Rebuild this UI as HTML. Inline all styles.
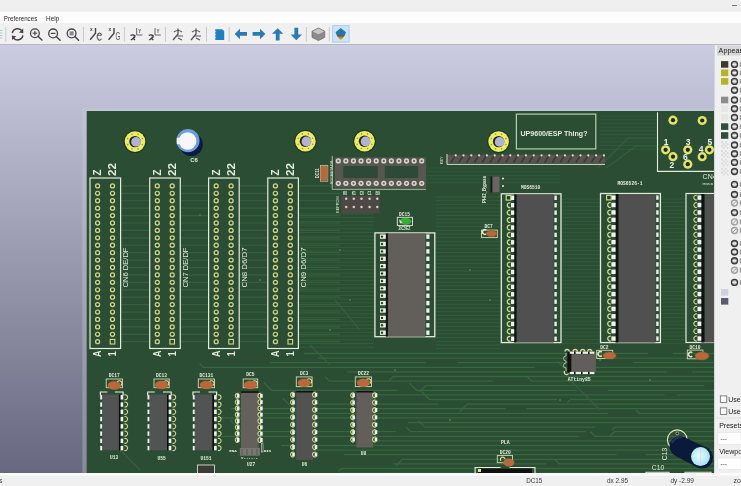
<!DOCTYPE html><html><head><meta charset="utf-8"><style>html,body{margin:0;padding:0;width:741px;height:486px;overflow:hidden;background:#f0f0f0}svg{display:block;will-change:transform}</style></head><body>
<svg width="741" height="486" viewBox="0 0 741 486">
<defs>
<linearGradient id="bg" x1="0" y1="45" x2="0" y2="473" gradientUnits="userSpaceOnUse">
<stop offset="0" stop-color="#cbcbe1"/><stop offset="1" stop-color="#67677f"/></linearGradient>
<clipPath id="cv"><rect x="0" y="45" width="714" height="428"/></clipPath>
<radialGradient id="c13" cx="0.45" cy="0.45" r="0.6"><stop offset="0" stop-color="#e8fbff"/><stop offset="1" stop-color="#9fe2f0"/></radialGradient>
<linearGradient id="hi" x1="0" y1="0" x2="0" y2="1"><stop offset="0" stop-color="#1d78bb"/><stop offset="0.55" stop-color="#1d78bb"/><stop offset="0.6" stop-color="#7a5a20"/><stop offset="1" stop-color="#e8c870"/></linearGradient>
</defs>
<rect x="0" y="0" width="741" height="12" fill="#efefef" />
<rect x="732" y="5" width="5" height="0.8" fill="#555" />
<rect x="0" y="11.8" width="741" height="11.4" fill="#fdfdfd" />
<text x="3.8" y="20.7" font-size="7" fill="#303030" text-anchor="start" font-weight="normal" font-family='"Liberation Sans", sans-serif' textLength="33.5" lengthAdjust="spacingAndGlyphs" >Preferences</text>
<text x="46.1" y="20.7" font-size="7" fill="#303030" text-anchor="start" font-weight="normal" font-family='"Liberation Sans", sans-serif' textLength="13.2" lengthAdjust="spacingAndGlyphs" >Help</text>
<rect x="0" y="23.2" width="741" height="20.8" fill="#f0f0f0" />
<rect x="0" y="44" width="741" height="1" fill="#b6b6c6" />
<rect x="0" y="30" width="2.5" height="1" fill="#9fd0d0" />
<rect x="0" y="32.5" width="2.5" height="1" fill="#9fd0d0" />
<rect x="0" y="35" width="2.5" height="1" fill="#9fd0d0" />
<rect x="0" y="37.5" width="2.5" height="1" fill="#9fd0d0" />
<rect x="5.3" y="27" width="1" height="14.5" fill="#c9c9c9" />
<rect x="83" y="27" width="1" height="14.5" fill="#c9c9c9" />
<rect x="123.9" y="27" width="1" height="14.5" fill="#c9c9c9" />
<rect x="165" y="27" width="1" height="14.5" fill="#c9c9c9" />
<rect x="206" y="27" width="1" height="14.5" fill="#c9c9c9" />
<rect x="228.7" y="27" width="1" height="14.5" fill="#c9c9c9" />
<rect x="305.9" y="27" width="1" height="14.5" fill="#c9c9c9" />
<rect x="328.8" y="27" width="1" height="14.5" fill="#c9c9c9" />
<path d="M12.3 33.2 A5.4 5.4 0 0 1 22.2 31.2" fill="none" stroke="#444" stroke-width="1.5"/>
<path d="M23.2 28.6 L23.3 33.2 L19.0 32.4 Z" fill="#444"/>
<path d="M22.9 35.4 A5.4 5.4 0 0 1 13.0 37.4" fill="none" stroke="#444" stroke-width="1.5"/>
<path d="M12.0 40.0 L11.9 35.4 L16.2 36.2 Z" fill="#444"/>
<circle cx="34.9" cy="33.2" r="4.4" fill="none" stroke="#444" stroke-width="1.3"/>
<path d="M38.0 36.300000000000004 L41.9 40.0" stroke="#444" stroke-width="1.5" stroke-linecap="round"/>
<rect x="32.6" y="32.65" width="4.6" height="1.1" fill="#444" />
<rect x="34.35" y="30.9" width="1.1" height="4.6" fill="#444" />
<circle cx="53.1" cy="33.4" r="4.4" fill="none" stroke="#444" stroke-width="1.3"/>
<path d="M56.2 36.5 L60.1 40.199999999999996" stroke="#444" stroke-width="1.5" stroke-linecap="round"/>
<rect x="50.8" y="32.8" width="4.6" height="1.2" fill="#444" />
<circle cx="71.6" cy="33.4" r="4.4" fill="none" stroke="#444" stroke-width="1.3"/>
<path d="M74.69999999999999 36.5 L78.6 40.199999999999996" stroke="#444" stroke-width="1.5" stroke-linecap="round"/>
<rect x="69.6" y="31.4" width="4" height="4" fill="#888" />
<text x="91.3" y="31.2" font-size="4.8" fill="#444" text-anchor="middle" font-weight="bold" font-family='"Liberation Sans", sans-serif' >x</text>
<path d="M95.5 28 L95.5 33.2 L90.1 39.8" fill="none" stroke="#444" stroke-width="1.4"/>
<path d="M101.6 35.2 H97.39999999999999 M101.6 35.2 A2.2 3.6 0 1 0 101.39999999999999 38.6" fill="none" stroke="#555" stroke-width="1.1"/>
<text x="109.8" y="31.2" font-size="4.8" fill="#444" text-anchor="middle" font-weight="bold" font-family='"Liberation Sans", sans-serif' >x</text>
<path d="M114.0 28 L114.0 33.2 L108.6 39.8" fill="none" stroke="#444" stroke-width="1.4"/>
<text x="115.5" y="39.5" font-size="10.5" fill="#555" text-anchor="start" font-weight="normal" font-family='"Liberation Sans", sans-serif' textLength="4.8" lengthAdjust="spacingAndGlyphs" >G</text>
<path d="M136.7 28 L136.7 35 L142.5 35" fill="none" stroke="#666" stroke-width="1"/>
<text x="138.2" y="32.5" font-size="4.5" fill="#555" text-anchor="start" font-weight="bold" font-family='"Liberation Sans", sans-serif' >Y</text>
<path d="M130.5 35.5 Q133 34 135 36 Q132 38 135 40 M131 40 L135 37" fill="none" stroke="#3a3a3a" stroke-width="1.4"/>
<path d="M155.0 28 L155.0 35 L160.8 35" fill="none" stroke="#666" stroke-width="1"/>
<text x="156.5" y="32.5" font-size="4.5" fill="#555" text-anchor="start" font-weight="bold" font-family='"Liberation Sans", sans-serif' >Y</text>
<path d="M148.8 35.5 Q151.3 34 153.3 36 Q150.3 38 153.3 40 M149.3 40 L153.3 37" fill="none" stroke="#3a3a3a" stroke-width="1.4"/>
<path d="M178 28.5 L178 34 L173 40" fill="none" stroke="#555" stroke-width="1.3"/>
<path d="M174 32 Q178 29 182 32 M176 36 L183 36 M178 38 L182 40" fill="none" stroke="#555" stroke-width="1.1"/>
<path d="M196 28.5 L196 34 L191 40" fill="none" stroke="#555" stroke-width="1.3"/>
<path d="M192 32 Q196 29 200 32 M194 36 L201 36 M196 38 L200 40" fill="none" stroke="#555" stroke-width="1.1"/>
<path d="M215.2 29.2 L222 29.2 L224.2 31 L224.2 40 L215.2 40 Z" fill="#1f7fc0"/>
<path d="M214.2 30 L215.6 31.5 L214.2 33" fill="none" stroke="#e8f2f8" stroke-width="0.8"/>
<path d="M214.2 33 L215.6 34.5 L214.2 36" fill="none" stroke="#e8f2f8" stroke-width="0.8"/>
<path d="M214.2 36 L215.6 37.5 L214.2 39" fill="none" stroke="#e8f2f8" stroke-width="0.8"/>
<path d="M214.2 39 L215.6 40.5 L214.2 42" fill="none" stroke="#e8f2f8" stroke-width="0.8"/>
<path d="M234.7 33.9 L240 28.7 L240 32 L247 32 L247 35.8 L240 35.8 L240 39.3 Z" fill="#2a7ab8"/>
<path d="M265.4 33.9 L260 28.7 L260 32 L252.6 32 L252.6 35.8 L260 35.8 L260 39.3 Z" fill="#2a7ab8"/>
<path d="M277.7 28.3 L283.3 33.8 L279.6 33.8 L279.6 40.5 L275.8 40.5 L275.8 33.8 L272 33.8 Z" fill="#2a7ab8"/>
<path d="M296.3 40.2 L302 34.6 L298.2 34.6 L298.2 27.8 L294.4 27.8 L294.4 34.6 L290.6 34.6 Z" fill="#2a7ab8"/>
<path d="M318.4 28 L324.8 31.2 L324.8 37.4 L318.4 40.6 L312 37.4 L312 31.2 Z" fill="#8c8c8c" stroke="#6a6a6a" stroke-width="0.7"/>
<path d="M318.4 28.6 L324.2 31.4 L318.4 34.2 L312.6 31.4 Z" fill="#c8c8c8"/>
<rect x="332.7" y="25.7" width="16.4" height="16.4" fill="#cce4f7" stroke="#99c8ee" stroke-width="0.8"/>
<path d="M340.8 28 L346 32.3 L344.5 36 L340.8 40.5 L337 36 L335.6 32.3 Z" fill="url(#hi)"/>
<rect x="0" y="45" width="714" height="428" fill="url(#bg)" />
<g clip-path="url(#cv)">
<rect x="82.3" y="107.8" width="640" height="400" fill="#ccd0d8" opacity="0.32"/>
<rect x="86.7" y="111" width="640" height="400" fill="#2a4d33" />
<path d="M121 185.9 H149 M180 185.9 H208 M239 185.9 H267 M299 185.9 H340 M121 193.32 H149 M180 193.32 H208 M239 193.32 H267 M299 193.32 H340 M121 200.74 H149 M180 200.74 H208 M239 200.74 H267 M299 200.74 H340 M121 208.16 H149 M180 208.16 H208 M239 208.16 H267 M299 208.16 H340 M121 215.58 H149 M180 215.58 H208 M239 215.58 H267 M299 215.58 H340 M121 223 H149 M180 223 H208 M239 223 H267 M299 223 H340 M121 230.42 H149 M180 230.42 H208 M239 230.42 H267 M299 230.42 H340 M121 237.84 H149 M180 237.84 H208 M239 237.84 H267 M299 237.84 H340 M121 245.26 H149 M180 245.26 H208 M239 245.26 H267 M299 245.26 H340 M121 252.68 H149 M180 252.68 H208 M239 252.68 H267 M299 252.68 H340 M121 260.1 H149 M180 260.1 H208 M239 260.1 H267 M299 260.1 H340 M121 267.52 H149 M180 267.52 H208 M239 267.52 H267 M299 267.52 H340 M121 274.94 H149 M180 274.94 H208 M239 274.94 H267 M299 274.94 H340 M121 282.36 H149 M180 282.36 H208 M239 282.36 H267 M299 282.36 H340 M121 289.78 H149 M180 289.78 H208 M239 289.78 H267 M299 289.78 H340 M121 297.2 H149 M180 297.2 H208 M239 297.2 H267 M299 297.2 H340 M121 304.62 H149 M180 304.62 H208 M239 304.62 H267 M299 304.62 H340 M121 312.04 H149 M180 312.04 H208 M239 312.04 H267 M299 312.04 H340 M121 319.46 H149 M180 319.46 H208 M239 319.46 H267 M299 319.46 H340 M121 326.88 H149 M180 326.88 H208 M239 326.88 H267 M299 326.88 H340 M121 334.3 H149 M180 334.3 H208 M239 334.3 H267 M299 334.3 H340 M121 341.72 H149 M180 341.72 H208 M239 341.72 H267 M299 341.72 H340" stroke="#34603c" stroke-width="1.2" fill="none"/>
<path d="M299 214 H374 M299 217.7 H374 M299 221.4 H374 M299 225.1 H374 M299 228.8 H374 M299 232.5 H374 M299 236.2 H374 M299 239.9 H374 M299 243.6 H374 M299 247.3 H374 M299 251 H374 M299 254.7 H374 M299 258.4 H374 M299 262.1 H374 M299 265.8 H374 M299 269.5 H374 M299 273.2 H374 M299 276.9 H374 M299 280.6 H374 M299 284.3 H374 M299 288 H374 M299 291.7 H374 M299 295.4 H374 M299 299.1 H374 M299 302.8 H374 M299 306.5 H374 M299 310.2 H374 M299 313.9 H374 M299 317.6 H374 M299 321.3 H374 M299 325 H374 M299 328.7 H374 M299 332.4 H374 M299 336.1 H374 M299 339.8 H374 M299 343.5 H374 M299 347.2 H374" stroke="#34603c" stroke-width="0.9" opacity="0.9" fill="none"/>
<path d="M436 197 H500 M436 200.7 H500 M436 204.4 H500 M436 208.1 H500 M436 211.8 H500 M436 215.5 H500 M436 219.2 H500 M436 222.9 H500 M436 226.6 H500 M436 230.3 H500 M436 234 H500 M436 237.7 H500 M436 241.4 H500 M436 245.1 H500 M436 248.8 H500 M436 252.5 H500 M436 256.2 H500 M436 259.9 H500 M436 263.6 H500 M436 267.3 H500 M436 271 H500 M436 274.7 H500 M436 278.4 H500 M436 282.1 H500 M436 285.8 H500 M436 289.5 H500 M436 293.2 H500 M436 296.9 H500 M436 300.6 H500 M436 304.3 H500 M436 308 H500 M436 311.7 H500 M436 315.4 H500 M436 319.1 H500 M436 322.8 H500 M436 326.5 H500 M436 330.2 H500 M436 333.9 H500 M436 337.6 H500 M436 341.3 H500 M436 345 H500 M436 348.7 H500" stroke="#34603c" stroke-width="0.9" opacity="0.9" fill="none"/>
<path d="M562 199 H600 M562 202.7 H600 M562 206.4 H600 M562 210.1 H600 M562 213.8 H600 M562 217.5 H600 M562 221.2 H600 M562 224.9 H600 M562 228.6 H600 M562 232.3 H600 M562 236 H600 M562 239.7 H600 M562 243.4 H600 M562 247.1 H600 M562 250.8 H600 M562 254.5 H600 M562 258.2 H600 M562 261.9 H600 M562 265.6 H600 M562 269.3 H600 M562 273 H600 M562 276.7 H600 M562 280.4 H600 M562 284.1 H600 M562 287.8 H600 M562 291.5 H600 M562 295.2 H600 M562 298.9 H600 M562 302.6 H600 M562 306.3 H600 M562 310 H600 M562 313.7 H600 M562 317.4 H600 M562 321.1 H600 M562 324.8 H600 M562 328.5 H600 M562 332.2 H600 M562 335.9 H600 M562 339.6 H600 M562 343.3 H600" stroke="#34603c" stroke-width="0.9" opacity="0.8" fill="none"/>
<path d="M661 199 H686 M661 202.7 H686 M661 206.4 H686 M661 210.1 H686 M661 213.8 H686 M661 217.5 H686 M661 221.2 H686 M661 224.9 H686 M661 228.6 H686 M661 232.3 H686 M661 236 H686 M661 239.7 H686 M661 243.4 H686 M661 247.1 H686 M661 250.8 H686 M661 254.5 H686 M661 258.2 H686 M661 261.9 H686 M661 265.6 H686 M661 269.3 H686 M661 273 H686 M661 276.7 H686 M661 280.4 H686 M661 284.1 H686 M661 287.8 H686 M661 291.5 H686 M661 295.2 H686 M661 298.9 H686 M661 302.6 H686 M661 306.3 H686 M661 310 H686 M661 313.7 H686 M661 317.4 H686 M661 321.1 H686 M661 324.8 H686 M661 328.5 H686 M661 332.2 H686 M661 335.9 H686 M661 339.6 H686 M661 343.3 H686" stroke="#34603c" stroke-width="0.9" opacity="0.8" fill="none"/>
<path d="M380 168 H560 M380 171.7 H560 M380 175.4 H560 M380 179.1 H560 M380 182.8 H560" stroke="#34603c" stroke-width="0.9" opacity="0.7" fill="none"/>
<path d="M600 116 H657 M600 119.7 H657 M600 123.4 H657 M600 127.1 H657 M600 130.8 H657 M600 134.5 H657 M600 138.2 H657 M600 141.9 H657 M600 145.6 H657 M600 149.3 H657" stroke="#34603c" stroke-width="0.9" opacity="0.7" fill="none"/>
<path d="M304.05 353.5 H647.96 M672.99 353.5 H714 M317.74 358.1 H689.69 M269.78 362.7 H426.05 M457.47 362.7 H594.22 M633.23 362.7 H714 M199.5 363.35 L203.45 367.3 H534.8 M557.64 361.35 L563.59 367.3 H714 M347.27 371.9 H667.18 M691.98 371.9 H714 M389.1 380.65 L393.25 376.5 H714 M325.07 376.65 L329.52 381.1 H492.69 M527.47 377.05 L531.52 381.1 H714 M419.34 391.85 L425.48 385.7 H704.45 M263.96 382.69 L271.58 390.3 H397.64 M409.55 383.31 L416.54 390.3 H576.96 M608.05 390.3 H714 M372.02 389.93 L376.99 394.9 H664.68 M676.7 394.9 H714 M421.54 391.52 L429.52 399.5 H557.37 M567.5 402.55 L570.55 399.5 H714 M282.64 397.92 L288.82 404.1 H438.53 M459.57 411.9 L467.37 404.1 H714 M231.22 408.7 H505.66 M526.36 408.7 H714 M236.45 413.3 H608.04 M635.88 409.91 L639.28 413.3 H714 M202.38 424.42 L208.9 417.9 H713.97 M408.11 422.5 H714 M418.48 420.83 L424.75 427.1 H595.31 M612.07 430.18 L615.16 427.1 H714 M251.63 426.04 L257.28 431.7 H395.92 M405.85 427.05 L410.51 431.7 H585.87 M609.6 436.49 L614.39 431.7 H714 M198.24 442.95 L204.89 436.3 H579.36 M590.35 431.46 L595.19 436.3 H714 M369.53 440.9 H714 M280.92 445.5 H674.98 M295.95 450.1 H714 M343.74 454.7 H616.67 M645.72 454.7 H714 M395.68 465.98 L402.35 459.3 H714 M392.83 463.9 H546.34 M555.02 459.75 L559.17 463.9 H714 M338.28 471.56 L341.34 468.5 H714 M340.7 473.1 H668.06 M685.45 477.31 L689.65 473.1 H714" stroke="#37663f" stroke-width="1.3" fill="none"/>
<path d="M598 168 L628 138 L657 138 M606 168 L636 146 L657 146 M335 300 L360 330 M120 450 L140 470 M230 420 L250 440 M310 345 L330 365 M570 380 L600 410" stroke="#34603c" stroke-width="1.2" fill="none"/>
<circle cx="200" cy="215" r="1" fill="#4c7a50" />
<circle cx="260" cy="280" r="1" fill="#4c7a50" />
<circle cx="340" cy="250" r="1" fill="#4c7a50" />
<circle cx="350" cy="300" r="1" fill="#4c7a50" />
<circle cx="330" cy="330" r="1" fill="#4c7a50" />
<circle cx="420" cy="260" r="1" fill="#4c7a50" />
<circle cx="470" cy="270" r="1" fill="#4c7a50" />
<circle cx="490" cy="300" r="1" fill="#4c7a50" />
<circle cx="600" cy="360" r="1" fill="#4c7a50" />
<circle cx="650" cy="380" r="1" fill="#4c7a50" />
<circle cx="560" cy="400" r="1" fill="#4c7a50" />
<circle cx="700" cy="300" r="1" fill="#4c7a50" />
<circle cx="395" cy="370" r="1" fill="#4c7a50" />
<circle cx="450" cy="420" r="1" fill="#4c7a50" />
<circle cx="150" cy="430" r="1" fill="#4c7a50" />
<circle cx="260" cy="420" r="1" fill="#4c7a50" />
<circle cx="135" cy="141.6" r="11.4" fill="#1b3322" opacity="0.8"/>
<circle cx="135" cy="141.6" r="10.3" fill="#ecec66" />
<circle cx="142.3" cy="144.62" r="0.8" fill="#9a9830" />
<circle cx="138.02" cy="148.9" r="0.8" fill="#9a9830" />
<circle cx="131.98" cy="148.9" r="0.8" fill="#9a9830" />
<circle cx="127.7" cy="144.62" r="0.8" fill="#9a9830" />
<circle cx="127.7" cy="138.58" r="0.8" fill="#9a9830" />
<circle cx="131.98" cy="134.3" r="0.8" fill="#9a9830" />
<circle cx="138.02" cy="134.3" r="0.8" fill="#9a9830" />
<circle cx="142.3" cy="138.58" r="0.8" fill="#9a9830" />
<circle cx="135" cy="141.6" r="5.7" fill="#1e2a20" />
<circle cx="136.1" cy="141.9" r="4.9" fill="#b4b2d2" />
<circle cx="305.4" cy="141.2" r="11.4" fill="#1b3322" opacity="0.8"/>
<circle cx="305.4" cy="141.2" r="10.3" fill="#ecec66" />
<circle cx="312.7" cy="144.22" r="0.8" fill="#9a9830" />
<circle cx="308.42" cy="148.5" r="0.8" fill="#9a9830" />
<circle cx="302.38" cy="148.5" r="0.8" fill="#9a9830" />
<circle cx="298.1" cy="144.22" r="0.8" fill="#9a9830" />
<circle cx="298.1" cy="138.18" r="0.8" fill="#9a9830" />
<circle cx="302.38" cy="133.9" r="0.8" fill="#9a9830" />
<circle cx="308.42" cy="133.9" r="0.8" fill="#9a9830" />
<circle cx="312.7" cy="138.18" r="0.8" fill="#9a9830" />
<circle cx="305.4" cy="141.2" r="5.7" fill="#1e2a20" />
<circle cx="306.5" cy="141.5" r="4.9" fill="#b4b2d2" />
<circle cx="364.5" cy="141.2" r="11.4" fill="#1b3322" opacity="0.8"/>
<circle cx="364.5" cy="141.2" r="10.3" fill="#ecec66" />
<circle cx="371.8" cy="144.22" r="0.8" fill="#9a9830" />
<circle cx="367.52" cy="148.5" r="0.8" fill="#9a9830" />
<circle cx="361.48" cy="148.5" r="0.8" fill="#9a9830" />
<circle cx="357.2" cy="144.22" r="0.8" fill="#9a9830" />
<circle cx="357.2" cy="138.18" r="0.8" fill="#9a9830" />
<circle cx="361.48" cy="133.9" r="0.8" fill="#9a9830" />
<circle cx="367.52" cy="133.9" r="0.8" fill="#9a9830" />
<circle cx="371.8" cy="138.18" r="0.8" fill="#9a9830" />
<circle cx="364.5" cy="141.2" r="5.7" fill="#1e2a20" />
<circle cx="365.6" cy="141.5" r="4.9" fill="#b4b2d2" />
<circle cx="498.6" cy="141.6" r="11.4" fill="#1b3322" opacity="0.8"/>
<circle cx="498.6" cy="141.6" r="10.3" fill="#ecec66" />
<circle cx="505.9" cy="144.62" r="0.8" fill="#9a9830" />
<circle cx="501.62" cy="148.9" r="0.8" fill="#9a9830" />
<circle cx="495.58" cy="148.9" r="0.8" fill="#9a9830" />
<circle cx="491.3" cy="144.62" r="0.8" fill="#9a9830" />
<circle cx="491.3" cy="138.58" r="0.8" fill="#9a9830" />
<circle cx="495.58" cy="134.3" r="0.8" fill="#9a9830" />
<circle cx="501.62" cy="134.3" r="0.8" fill="#9a9830" />
<circle cx="505.9" cy="138.58" r="0.8" fill="#9a9830" />
<circle cx="498.6" cy="141.6" r="5.7" fill="#1e2a20" />
<circle cx="499.7" cy="141.9" r="4.9" fill="#b4b2d2" />
<circle cx="191.2" cy="144.5" r="11.6" fill="#0a1a40" />
<circle cx="188" cy="140.6" r="11.6" fill="#6a9ee0" />
<circle cx="187.6" cy="141" r="8.8" fill="#f8f6fc" />
<rect x="176.8" y="137.8" width="4" height="6.4" fill="#f0f2f4" />
<text x="194" y="162" font-size="6" fill="#e4ecdc" text-anchor="middle" font-weight="bold" font-family='"Liberation Sans", sans-serif' >C6</text>
<rect x="90" y="178" width="30.6" height="170.5" fill="none" stroke="#e4ecdc" stroke-width="1.2" />
<circle cx="97.6" cy="185.9" r="2.65" fill="#d0d688"/>
<circle cx="97.6" cy="185.9" r="1.45" fill="#56643c"/>
<circle cx="97.6" cy="185.9" r="0.75" fill="#141c10"/>
<circle cx="112.5" cy="185.9" r="2.65" fill="#d0d688"/>
<circle cx="112.5" cy="185.9" r="1.45" fill="#56643c"/>
<circle cx="112.5" cy="185.9" r="0.75" fill="#141c10"/>
<circle cx="97.6" cy="193.32" r="2.65" fill="#d0d688"/>
<circle cx="97.6" cy="193.32" r="1.45" fill="#56643c"/>
<circle cx="97.6" cy="193.32" r="0.75" fill="#141c10"/>
<circle cx="112.5" cy="193.32" r="2.65" fill="#d0d688"/>
<circle cx="112.5" cy="193.32" r="1.45" fill="#56643c"/>
<circle cx="112.5" cy="193.32" r="0.75" fill="#141c10"/>
<circle cx="97.6" cy="200.74" r="2.65" fill="#d0d688"/>
<circle cx="97.6" cy="200.74" r="1.45" fill="#56643c"/>
<circle cx="97.6" cy="200.74" r="0.75" fill="#141c10"/>
<circle cx="112.5" cy="200.74" r="2.65" fill="#d0d688"/>
<circle cx="112.5" cy="200.74" r="1.45" fill="#56643c"/>
<circle cx="112.5" cy="200.74" r="0.75" fill="#141c10"/>
<circle cx="97.6" cy="208.16" r="2.65" fill="#d0d688"/>
<circle cx="97.6" cy="208.16" r="1.45" fill="#56643c"/>
<circle cx="97.6" cy="208.16" r="0.75" fill="#141c10"/>
<circle cx="112.5" cy="208.16" r="2.65" fill="#d0d688"/>
<circle cx="112.5" cy="208.16" r="1.45" fill="#56643c"/>
<circle cx="112.5" cy="208.16" r="0.75" fill="#141c10"/>
<circle cx="97.6" cy="215.58" r="2.65" fill="#d0d688"/>
<circle cx="97.6" cy="215.58" r="1.45" fill="#56643c"/>
<circle cx="97.6" cy="215.58" r="0.75" fill="#141c10"/>
<circle cx="112.5" cy="215.58" r="2.65" fill="#d0d688"/>
<circle cx="112.5" cy="215.58" r="1.45" fill="#56643c"/>
<circle cx="112.5" cy="215.58" r="0.75" fill="#141c10"/>
<circle cx="97.6" cy="223" r="2.65" fill="#d0d688"/>
<circle cx="97.6" cy="223" r="1.45" fill="#56643c"/>
<circle cx="97.6" cy="223" r="0.75" fill="#141c10"/>
<circle cx="112.5" cy="223" r="2.65" fill="#d0d688"/>
<circle cx="112.5" cy="223" r="1.45" fill="#56643c"/>
<circle cx="112.5" cy="223" r="0.75" fill="#141c10"/>
<circle cx="97.6" cy="230.42" r="2.65" fill="#d0d688"/>
<circle cx="97.6" cy="230.42" r="1.45" fill="#56643c"/>
<circle cx="97.6" cy="230.42" r="0.75" fill="#141c10"/>
<circle cx="112.5" cy="230.42" r="2.65" fill="#d0d688"/>
<circle cx="112.5" cy="230.42" r="1.45" fill="#56643c"/>
<circle cx="112.5" cy="230.42" r="0.75" fill="#141c10"/>
<circle cx="97.6" cy="237.84" r="2.65" fill="#d0d688"/>
<circle cx="97.6" cy="237.84" r="1.45" fill="#56643c"/>
<circle cx="97.6" cy="237.84" r="0.75" fill="#141c10"/>
<circle cx="112.5" cy="237.84" r="2.65" fill="#d0d688"/>
<circle cx="112.5" cy="237.84" r="1.45" fill="#56643c"/>
<circle cx="112.5" cy="237.84" r="0.75" fill="#141c10"/>
<circle cx="97.6" cy="245.26" r="2.65" fill="#d0d688"/>
<circle cx="97.6" cy="245.26" r="1.45" fill="#56643c"/>
<circle cx="97.6" cy="245.26" r="0.75" fill="#141c10"/>
<circle cx="112.5" cy="245.26" r="2.65" fill="#d0d688"/>
<circle cx="112.5" cy="245.26" r="1.45" fill="#56643c"/>
<circle cx="112.5" cy="245.26" r="0.75" fill="#141c10"/>
<circle cx="97.6" cy="252.68" r="2.65" fill="#d0d688"/>
<circle cx="97.6" cy="252.68" r="1.45" fill="#56643c"/>
<circle cx="97.6" cy="252.68" r="0.75" fill="#141c10"/>
<circle cx="112.5" cy="252.68" r="2.65" fill="#d0d688"/>
<circle cx="112.5" cy="252.68" r="1.45" fill="#56643c"/>
<circle cx="112.5" cy="252.68" r="0.75" fill="#141c10"/>
<circle cx="97.6" cy="260.1" r="2.65" fill="#d0d688"/>
<circle cx="97.6" cy="260.1" r="1.45" fill="#56643c"/>
<circle cx="97.6" cy="260.1" r="0.75" fill="#141c10"/>
<circle cx="112.5" cy="260.1" r="2.65" fill="#d0d688"/>
<circle cx="112.5" cy="260.1" r="1.45" fill="#56643c"/>
<circle cx="112.5" cy="260.1" r="0.75" fill="#141c10"/>
<circle cx="97.6" cy="267.52" r="2.65" fill="#d0d688"/>
<circle cx="97.6" cy="267.52" r="1.45" fill="#56643c"/>
<circle cx="97.6" cy="267.52" r="0.75" fill="#141c10"/>
<circle cx="112.5" cy="267.52" r="2.65" fill="#d0d688"/>
<circle cx="112.5" cy="267.52" r="1.45" fill="#56643c"/>
<circle cx="112.5" cy="267.52" r="0.75" fill="#141c10"/>
<circle cx="97.6" cy="274.94" r="2.65" fill="#d0d688"/>
<circle cx="97.6" cy="274.94" r="1.45" fill="#56643c"/>
<circle cx="97.6" cy="274.94" r="0.75" fill="#141c10"/>
<circle cx="112.5" cy="274.94" r="2.65" fill="#d0d688"/>
<circle cx="112.5" cy="274.94" r="1.45" fill="#56643c"/>
<circle cx="112.5" cy="274.94" r="0.75" fill="#141c10"/>
<circle cx="97.6" cy="282.36" r="2.65" fill="#d0d688"/>
<circle cx="97.6" cy="282.36" r="1.45" fill="#56643c"/>
<circle cx="97.6" cy="282.36" r="0.75" fill="#141c10"/>
<circle cx="112.5" cy="282.36" r="2.65" fill="#d0d688"/>
<circle cx="112.5" cy="282.36" r="1.45" fill="#56643c"/>
<circle cx="112.5" cy="282.36" r="0.75" fill="#141c10"/>
<circle cx="97.6" cy="289.78" r="2.65" fill="#d0d688"/>
<circle cx="97.6" cy="289.78" r="1.45" fill="#56643c"/>
<circle cx="97.6" cy="289.78" r="0.75" fill="#141c10"/>
<circle cx="112.5" cy="289.78" r="2.65" fill="#d0d688"/>
<circle cx="112.5" cy="289.78" r="1.45" fill="#56643c"/>
<circle cx="112.5" cy="289.78" r="0.75" fill="#141c10"/>
<circle cx="97.6" cy="297.2" r="2.65" fill="#d0d688"/>
<circle cx="97.6" cy="297.2" r="1.45" fill="#56643c"/>
<circle cx="97.6" cy="297.2" r="0.75" fill="#141c10"/>
<circle cx="112.5" cy="297.2" r="2.65" fill="#d0d688"/>
<circle cx="112.5" cy="297.2" r="1.45" fill="#56643c"/>
<circle cx="112.5" cy="297.2" r="0.75" fill="#141c10"/>
<circle cx="97.6" cy="304.62" r="2.65" fill="#d0d688"/>
<circle cx="97.6" cy="304.62" r="1.45" fill="#56643c"/>
<circle cx="97.6" cy="304.62" r="0.75" fill="#141c10"/>
<circle cx="112.5" cy="304.62" r="2.65" fill="#d0d688"/>
<circle cx="112.5" cy="304.62" r="1.45" fill="#56643c"/>
<circle cx="112.5" cy="304.62" r="0.75" fill="#141c10"/>
<circle cx="97.6" cy="312.04" r="2.65" fill="#d0d688"/>
<circle cx="97.6" cy="312.04" r="1.45" fill="#56643c"/>
<circle cx="97.6" cy="312.04" r="0.75" fill="#141c10"/>
<circle cx="112.5" cy="312.04" r="2.65" fill="#d0d688"/>
<circle cx="112.5" cy="312.04" r="1.45" fill="#56643c"/>
<circle cx="112.5" cy="312.04" r="0.75" fill="#141c10"/>
<circle cx="97.6" cy="319.46" r="2.65" fill="#d0d688"/>
<circle cx="97.6" cy="319.46" r="1.45" fill="#56643c"/>
<circle cx="97.6" cy="319.46" r="0.75" fill="#141c10"/>
<circle cx="112.5" cy="319.46" r="2.65" fill="#d0d688"/>
<circle cx="112.5" cy="319.46" r="1.45" fill="#56643c"/>
<circle cx="112.5" cy="319.46" r="0.75" fill="#141c10"/>
<circle cx="97.6" cy="326.88" r="2.65" fill="#d0d688"/>
<circle cx="97.6" cy="326.88" r="1.45" fill="#56643c"/>
<circle cx="97.6" cy="326.88" r="0.75" fill="#141c10"/>
<circle cx="112.5" cy="326.88" r="2.65" fill="#d0d688"/>
<circle cx="112.5" cy="326.88" r="1.45" fill="#56643c"/>
<circle cx="112.5" cy="326.88" r="0.75" fill="#141c10"/>
<circle cx="97.6" cy="334.3" r="2.65" fill="#d0d688"/>
<circle cx="97.6" cy="334.3" r="1.45" fill="#56643c"/>
<circle cx="97.6" cy="334.3" r="0.75" fill="#141c10"/>
<circle cx="112.5" cy="334.3" r="2.65" fill="#d0d688"/>
<circle cx="112.5" cy="334.3" r="1.45" fill="#56643c"/>
<circle cx="112.5" cy="334.3" r="0.75" fill="#141c10"/>
<circle cx="97.6" cy="341.72" r="2.65" fill="#d0d688"/>
<circle cx="97.6" cy="341.72" r="1.45" fill="#56643c"/>
<circle cx="97.6" cy="341.72" r="0.75" fill="#141c10"/>
<rect x="110.2" y="339.42" width="4.6" height="4.6" fill="#2c4a2c" stroke="#d4d68a" stroke-width="1.1"/>
<text x="101.15" y="172.5" font-size="10" fill="#e4ecdc" text-anchor="middle" font-weight="bold" font-family='"Liberation Sans", sans-serif' textLength="6" lengthAdjust="spacingAndGlyphs" transform="rotate(-90 101.15 172.5)" >Z</text>
<text x="116.2" y="169.5" font-size="10" fill="#e4ecdc" text-anchor="middle" font-weight="bold" font-family='"Liberation Sans", sans-serif' textLength="12.9" lengthAdjust="spacingAndGlyphs" transform="rotate(-90 116.2 169.5)" >22</text>
<text x="101.15" y="353.7" font-size="10" fill="#e4ecdc" text-anchor="middle" font-weight="bold" font-family='"Liberation Sans", sans-serif' textLength="6.5" lengthAdjust="spacingAndGlyphs" transform="rotate(-90 101.15 353.7)" >A</text>
<text x="116.05" y="353.7" font-size="10" fill="#e4ecdc" text-anchor="middle" font-weight="bold" font-family='"Liberation Sans", sans-serif' textLength="5" lengthAdjust="spacingAndGlyphs" transform="rotate(-90 116.05 353.7)" >1</text>
<text x="127.9" y="267.5" font-size="7.4" fill="#e4ecdc" text-anchor="middle" font-weight="normal" font-family='"Liberation Sans", sans-serif' textLength="40" lengthAdjust="spacingAndGlyphs" transform="rotate(-90 127.9 267.5)" >CN6 DE/DF</text>
<rect x="149.7" y="178" width="30.6" height="170.5" fill="none" stroke="#e4ecdc" stroke-width="1.2" />
<circle cx="157.3" cy="185.9" r="2.65" fill="#d0d688"/>
<circle cx="157.3" cy="185.9" r="1.45" fill="#56643c"/>
<circle cx="157.3" cy="185.9" r="0.75" fill="#141c10"/>
<circle cx="172.2" cy="185.9" r="2.65" fill="#d0d688"/>
<circle cx="172.2" cy="185.9" r="1.45" fill="#56643c"/>
<circle cx="172.2" cy="185.9" r="0.75" fill="#141c10"/>
<circle cx="157.3" cy="193.32" r="2.65" fill="#d0d688"/>
<circle cx="157.3" cy="193.32" r="1.45" fill="#56643c"/>
<circle cx="157.3" cy="193.32" r="0.75" fill="#141c10"/>
<circle cx="172.2" cy="193.32" r="2.65" fill="#d0d688"/>
<circle cx="172.2" cy="193.32" r="1.45" fill="#56643c"/>
<circle cx="172.2" cy="193.32" r="0.75" fill="#141c10"/>
<circle cx="157.3" cy="200.74" r="2.65" fill="#d0d688"/>
<circle cx="157.3" cy="200.74" r="1.45" fill="#56643c"/>
<circle cx="157.3" cy="200.74" r="0.75" fill="#141c10"/>
<circle cx="172.2" cy="200.74" r="2.65" fill="#d0d688"/>
<circle cx="172.2" cy="200.74" r="1.45" fill="#56643c"/>
<circle cx="172.2" cy="200.74" r="0.75" fill="#141c10"/>
<circle cx="157.3" cy="208.16" r="2.65" fill="#d0d688"/>
<circle cx="157.3" cy="208.16" r="1.45" fill="#56643c"/>
<circle cx="157.3" cy="208.16" r="0.75" fill="#141c10"/>
<circle cx="172.2" cy="208.16" r="2.65" fill="#d0d688"/>
<circle cx="172.2" cy="208.16" r="1.45" fill="#56643c"/>
<circle cx="172.2" cy="208.16" r="0.75" fill="#141c10"/>
<circle cx="157.3" cy="215.58" r="2.65" fill="#d0d688"/>
<circle cx="157.3" cy="215.58" r="1.45" fill="#56643c"/>
<circle cx="157.3" cy="215.58" r="0.75" fill="#141c10"/>
<circle cx="172.2" cy="215.58" r="2.65" fill="#d0d688"/>
<circle cx="172.2" cy="215.58" r="1.45" fill="#56643c"/>
<circle cx="172.2" cy="215.58" r="0.75" fill="#141c10"/>
<circle cx="157.3" cy="223" r="2.65" fill="#d0d688"/>
<circle cx="157.3" cy="223" r="1.45" fill="#56643c"/>
<circle cx="157.3" cy="223" r="0.75" fill="#141c10"/>
<circle cx="172.2" cy="223" r="2.65" fill="#d0d688"/>
<circle cx="172.2" cy="223" r="1.45" fill="#56643c"/>
<circle cx="172.2" cy="223" r="0.75" fill="#141c10"/>
<circle cx="157.3" cy="230.42" r="2.65" fill="#d0d688"/>
<circle cx="157.3" cy="230.42" r="1.45" fill="#56643c"/>
<circle cx="157.3" cy="230.42" r="0.75" fill="#141c10"/>
<circle cx="172.2" cy="230.42" r="2.65" fill="#d0d688"/>
<circle cx="172.2" cy="230.42" r="1.45" fill="#56643c"/>
<circle cx="172.2" cy="230.42" r="0.75" fill="#141c10"/>
<circle cx="157.3" cy="237.84" r="2.65" fill="#d0d688"/>
<circle cx="157.3" cy="237.84" r="1.45" fill="#56643c"/>
<circle cx="157.3" cy="237.84" r="0.75" fill="#141c10"/>
<circle cx="172.2" cy="237.84" r="2.65" fill="#d0d688"/>
<circle cx="172.2" cy="237.84" r="1.45" fill="#56643c"/>
<circle cx="172.2" cy="237.84" r="0.75" fill="#141c10"/>
<circle cx="157.3" cy="245.26" r="2.65" fill="#d0d688"/>
<circle cx="157.3" cy="245.26" r="1.45" fill="#56643c"/>
<circle cx="157.3" cy="245.26" r="0.75" fill="#141c10"/>
<circle cx="172.2" cy="245.26" r="2.65" fill="#d0d688"/>
<circle cx="172.2" cy="245.26" r="1.45" fill="#56643c"/>
<circle cx="172.2" cy="245.26" r="0.75" fill="#141c10"/>
<circle cx="157.3" cy="252.68" r="2.65" fill="#d0d688"/>
<circle cx="157.3" cy="252.68" r="1.45" fill="#56643c"/>
<circle cx="157.3" cy="252.68" r="0.75" fill="#141c10"/>
<circle cx="172.2" cy="252.68" r="2.65" fill="#d0d688"/>
<circle cx="172.2" cy="252.68" r="1.45" fill="#56643c"/>
<circle cx="172.2" cy="252.68" r="0.75" fill="#141c10"/>
<circle cx="157.3" cy="260.1" r="2.65" fill="#d0d688"/>
<circle cx="157.3" cy="260.1" r="1.45" fill="#56643c"/>
<circle cx="157.3" cy="260.1" r="0.75" fill="#141c10"/>
<circle cx="172.2" cy="260.1" r="2.65" fill="#d0d688"/>
<circle cx="172.2" cy="260.1" r="1.45" fill="#56643c"/>
<circle cx="172.2" cy="260.1" r="0.75" fill="#141c10"/>
<circle cx="157.3" cy="267.52" r="2.65" fill="#d0d688"/>
<circle cx="157.3" cy="267.52" r="1.45" fill="#56643c"/>
<circle cx="157.3" cy="267.52" r="0.75" fill="#141c10"/>
<circle cx="172.2" cy="267.52" r="2.65" fill="#d0d688"/>
<circle cx="172.2" cy="267.52" r="1.45" fill="#56643c"/>
<circle cx="172.2" cy="267.52" r="0.75" fill="#141c10"/>
<circle cx="157.3" cy="274.94" r="2.65" fill="#d0d688"/>
<circle cx="157.3" cy="274.94" r="1.45" fill="#56643c"/>
<circle cx="157.3" cy="274.94" r="0.75" fill="#141c10"/>
<circle cx="172.2" cy="274.94" r="2.65" fill="#d0d688"/>
<circle cx="172.2" cy="274.94" r="1.45" fill="#56643c"/>
<circle cx="172.2" cy="274.94" r="0.75" fill="#141c10"/>
<circle cx="157.3" cy="282.36" r="2.65" fill="#d0d688"/>
<circle cx="157.3" cy="282.36" r="1.45" fill="#56643c"/>
<circle cx="157.3" cy="282.36" r="0.75" fill="#141c10"/>
<circle cx="172.2" cy="282.36" r="2.65" fill="#d0d688"/>
<circle cx="172.2" cy="282.36" r="1.45" fill="#56643c"/>
<circle cx="172.2" cy="282.36" r="0.75" fill="#141c10"/>
<circle cx="157.3" cy="289.78" r="2.65" fill="#d0d688"/>
<circle cx="157.3" cy="289.78" r="1.45" fill="#56643c"/>
<circle cx="157.3" cy="289.78" r="0.75" fill="#141c10"/>
<circle cx="172.2" cy="289.78" r="2.65" fill="#d0d688"/>
<circle cx="172.2" cy="289.78" r="1.45" fill="#56643c"/>
<circle cx="172.2" cy="289.78" r="0.75" fill="#141c10"/>
<circle cx="157.3" cy="297.2" r="2.65" fill="#d0d688"/>
<circle cx="157.3" cy="297.2" r="1.45" fill="#56643c"/>
<circle cx="157.3" cy="297.2" r="0.75" fill="#141c10"/>
<circle cx="172.2" cy="297.2" r="2.65" fill="#d0d688"/>
<circle cx="172.2" cy="297.2" r="1.45" fill="#56643c"/>
<circle cx="172.2" cy="297.2" r="0.75" fill="#141c10"/>
<circle cx="157.3" cy="304.62" r="2.65" fill="#d0d688"/>
<circle cx="157.3" cy="304.62" r="1.45" fill="#56643c"/>
<circle cx="157.3" cy="304.62" r="0.75" fill="#141c10"/>
<circle cx="172.2" cy="304.62" r="2.65" fill="#d0d688"/>
<circle cx="172.2" cy="304.62" r="1.45" fill="#56643c"/>
<circle cx="172.2" cy="304.62" r="0.75" fill="#141c10"/>
<circle cx="157.3" cy="312.04" r="2.65" fill="#d0d688"/>
<circle cx="157.3" cy="312.04" r="1.45" fill="#56643c"/>
<circle cx="157.3" cy="312.04" r="0.75" fill="#141c10"/>
<circle cx="172.2" cy="312.04" r="2.65" fill="#d0d688"/>
<circle cx="172.2" cy="312.04" r="1.45" fill="#56643c"/>
<circle cx="172.2" cy="312.04" r="0.75" fill="#141c10"/>
<circle cx="157.3" cy="319.46" r="2.65" fill="#d0d688"/>
<circle cx="157.3" cy="319.46" r="1.45" fill="#56643c"/>
<circle cx="157.3" cy="319.46" r="0.75" fill="#141c10"/>
<circle cx="172.2" cy="319.46" r="2.65" fill="#d0d688"/>
<circle cx="172.2" cy="319.46" r="1.45" fill="#56643c"/>
<circle cx="172.2" cy="319.46" r="0.75" fill="#141c10"/>
<circle cx="157.3" cy="326.88" r="2.65" fill="#d0d688"/>
<circle cx="157.3" cy="326.88" r="1.45" fill="#56643c"/>
<circle cx="157.3" cy="326.88" r="0.75" fill="#141c10"/>
<circle cx="172.2" cy="326.88" r="2.65" fill="#d0d688"/>
<circle cx="172.2" cy="326.88" r="1.45" fill="#56643c"/>
<circle cx="172.2" cy="326.88" r="0.75" fill="#141c10"/>
<circle cx="157.3" cy="334.3" r="2.65" fill="#d0d688"/>
<circle cx="157.3" cy="334.3" r="1.45" fill="#56643c"/>
<circle cx="157.3" cy="334.3" r="0.75" fill="#141c10"/>
<circle cx="172.2" cy="334.3" r="2.65" fill="#d0d688"/>
<circle cx="172.2" cy="334.3" r="1.45" fill="#56643c"/>
<circle cx="172.2" cy="334.3" r="0.75" fill="#141c10"/>
<circle cx="157.3" cy="341.72" r="2.65" fill="#d0d688"/>
<circle cx="157.3" cy="341.72" r="1.45" fill="#56643c"/>
<circle cx="157.3" cy="341.72" r="0.75" fill="#141c10"/>
<rect x="169.9" y="339.42" width="4.6" height="4.6" fill="#2c4a2c" stroke="#d4d68a" stroke-width="1.1"/>
<text x="160.85" y="172.5" font-size="10" fill="#e4ecdc" text-anchor="middle" font-weight="bold" font-family='"Liberation Sans", sans-serif' textLength="6" lengthAdjust="spacingAndGlyphs" transform="rotate(-90 160.85 172.5)" >Z</text>
<text x="175.9" y="169.5" font-size="10" fill="#e4ecdc" text-anchor="middle" font-weight="bold" font-family='"Liberation Sans", sans-serif' textLength="12.9" lengthAdjust="spacingAndGlyphs" transform="rotate(-90 175.9 169.5)" >22</text>
<text x="160.85" y="353.7" font-size="10" fill="#e4ecdc" text-anchor="middle" font-weight="bold" font-family='"Liberation Sans", sans-serif' textLength="6.5" lengthAdjust="spacingAndGlyphs" transform="rotate(-90 160.85 353.7)" >A</text>
<text x="175.75" y="353.7" font-size="10" fill="#e4ecdc" text-anchor="middle" font-weight="bold" font-family='"Liberation Sans", sans-serif' textLength="5" lengthAdjust="spacingAndGlyphs" transform="rotate(-90 175.75 353.7)" >1</text>
<text x="187.6" y="267.5" font-size="7.4" fill="#e4ecdc" text-anchor="middle" font-weight="normal" font-family='"Liberation Sans", sans-serif' textLength="40" lengthAdjust="spacingAndGlyphs" transform="rotate(-90 187.6 267.5)" >CN7 DE/DF</text>
<rect x="208.6" y="178" width="30.6" height="170.5" fill="none" stroke="#e4ecdc" stroke-width="1.2" />
<circle cx="216.2" cy="185.9" r="2.65" fill="#d0d688"/>
<circle cx="216.2" cy="185.9" r="1.45" fill="#56643c"/>
<circle cx="216.2" cy="185.9" r="0.75" fill="#141c10"/>
<circle cx="231.1" cy="185.9" r="2.65" fill="#d0d688"/>
<circle cx="231.1" cy="185.9" r="1.45" fill="#56643c"/>
<circle cx="231.1" cy="185.9" r="0.75" fill="#141c10"/>
<circle cx="216.2" cy="193.32" r="2.65" fill="#d0d688"/>
<circle cx="216.2" cy="193.32" r="1.45" fill="#56643c"/>
<circle cx="216.2" cy="193.32" r="0.75" fill="#141c10"/>
<circle cx="231.1" cy="193.32" r="2.65" fill="#d0d688"/>
<circle cx="231.1" cy="193.32" r="1.45" fill="#56643c"/>
<circle cx="231.1" cy="193.32" r="0.75" fill="#141c10"/>
<circle cx="216.2" cy="200.74" r="2.65" fill="#d0d688"/>
<circle cx="216.2" cy="200.74" r="1.45" fill="#56643c"/>
<circle cx="216.2" cy="200.74" r="0.75" fill="#141c10"/>
<circle cx="231.1" cy="200.74" r="2.65" fill="#d0d688"/>
<circle cx="231.1" cy="200.74" r="1.45" fill="#56643c"/>
<circle cx="231.1" cy="200.74" r="0.75" fill="#141c10"/>
<circle cx="216.2" cy="208.16" r="2.65" fill="#d0d688"/>
<circle cx="216.2" cy="208.16" r="1.45" fill="#56643c"/>
<circle cx="216.2" cy="208.16" r="0.75" fill="#141c10"/>
<circle cx="231.1" cy="208.16" r="2.65" fill="#d0d688"/>
<circle cx="231.1" cy="208.16" r="1.45" fill="#56643c"/>
<circle cx="231.1" cy="208.16" r="0.75" fill="#141c10"/>
<circle cx="216.2" cy="215.58" r="2.65" fill="#d0d688"/>
<circle cx="216.2" cy="215.58" r="1.45" fill="#56643c"/>
<circle cx="216.2" cy="215.58" r="0.75" fill="#141c10"/>
<circle cx="231.1" cy="215.58" r="2.65" fill="#d0d688"/>
<circle cx="231.1" cy="215.58" r="1.45" fill="#56643c"/>
<circle cx="231.1" cy="215.58" r="0.75" fill="#141c10"/>
<circle cx="216.2" cy="223" r="2.65" fill="#d0d688"/>
<circle cx="216.2" cy="223" r="1.45" fill="#56643c"/>
<circle cx="216.2" cy="223" r="0.75" fill="#141c10"/>
<circle cx="231.1" cy="223" r="2.65" fill="#d0d688"/>
<circle cx="231.1" cy="223" r="1.45" fill="#56643c"/>
<circle cx="231.1" cy="223" r="0.75" fill="#141c10"/>
<circle cx="216.2" cy="230.42" r="2.65" fill="#d0d688"/>
<circle cx="216.2" cy="230.42" r="1.45" fill="#56643c"/>
<circle cx="216.2" cy="230.42" r="0.75" fill="#141c10"/>
<circle cx="231.1" cy="230.42" r="2.65" fill="#d0d688"/>
<circle cx="231.1" cy="230.42" r="1.45" fill="#56643c"/>
<circle cx="231.1" cy="230.42" r="0.75" fill="#141c10"/>
<circle cx="216.2" cy="237.84" r="2.65" fill="#d0d688"/>
<circle cx="216.2" cy="237.84" r="1.45" fill="#56643c"/>
<circle cx="216.2" cy="237.84" r="0.75" fill="#141c10"/>
<circle cx="231.1" cy="237.84" r="2.65" fill="#d0d688"/>
<circle cx="231.1" cy="237.84" r="1.45" fill="#56643c"/>
<circle cx="231.1" cy="237.84" r="0.75" fill="#141c10"/>
<circle cx="216.2" cy="245.26" r="2.65" fill="#d0d688"/>
<circle cx="216.2" cy="245.26" r="1.45" fill="#56643c"/>
<circle cx="216.2" cy="245.26" r="0.75" fill="#141c10"/>
<circle cx="231.1" cy="245.26" r="2.65" fill="#d0d688"/>
<circle cx="231.1" cy="245.26" r="1.45" fill="#56643c"/>
<circle cx="231.1" cy="245.26" r="0.75" fill="#141c10"/>
<circle cx="216.2" cy="252.68" r="2.65" fill="#d0d688"/>
<circle cx="216.2" cy="252.68" r="1.45" fill="#56643c"/>
<circle cx="216.2" cy="252.68" r="0.75" fill="#141c10"/>
<circle cx="231.1" cy="252.68" r="2.65" fill="#d0d688"/>
<circle cx="231.1" cy="252.68" r="1.45" fill="#56643c"/>
<circle cx="231.1" cy="252.68" r="0.75" fill="#141c10"/>
<circle cx="216.2" cy="260.1" r="2.65" fill="#d0d688"/>
<circle cx="216.2" cy="260.1" r="1.45" fill="#56643c"/>
<circle cx="216.2" cy="260.1" r="0.75" fill="#141c10"/>
<circle cx="231.1" cy="260.1" r="2.65" fill="#d0d688"/>
<circle cx="231.1" cy="260.1" r="1.45" fill="#56643c"/>
<circle cx="231.1" cy="260.1" r="0.75" fill="#141c10"/>
<circle cx="216.2" cy="267.52" r="2.65" fill="#d0d688"/>
<circle cx="216.2" cy="267.52" r="1.45" fill="#56643c"/>
<circle cx="216.2" cy="267.52" r="0.75" fill="#141c10"/>
<circle cx="231.1" cy="267.52" r="2.65" fill="#d0d688"/>
<circle cx="231.1" cy="267.52" r="1.45" fill="#56643c"/>
<circle cx="231.1" cy="267.52" r="0.75" fill="#141c10"/>
<circle cx="216.2" cy="274.94" r="2.65" fill="#d0d688"/>
<circle cx="216.2" cy="274.94" r="1.45" fill="#56643c"/>
<circle cx="216.2" cy="274.94" r="0.75" fill="#141c10"/>
<circle cx="231.1" cy="274.94" r="2.65" fill="#d0d688"/>
<circle cx="231.1" cy="274.94" r="1.45" fill="#56643c"/>
<circle cx="231.1" cy="274.94" r="0.75" fill="#141c10"/>
<circle cx="216.2" cy="282.36" r="2.65" fill="#d0d688"/>
<circle cx="216.2" cy="282.36" r="1.45" fill="#56643c"/>
<circle cx="216.2" cy="282.36" r="0.75" fill="#141c10"/>
<circle cx="231.1" cy="282.36" r="2.65" fill="#d0d688"/>
<circle cx="231.1" cy="282.36" r="1.45" fill="#56643c"/>
<circle cx="231.1" cy="282.36" r="0.75" fill="#141c10"/>
<circle cx="216.2" cy="289.78" r="2.65" fill="#d0d688"/>
<circle cx="216.2" cy="289.78" r="1.45" fill="#56643c"/>
<circle cx="216.2" cy="289.78" r="0.75" fill="#141c10"/>
<circle cx="231.1" cy="289.78" r="2.65" fill="#d0d688"/>
<circle cx="231.1" cy="289.78" r="1.45" fill="#56643c"/>
<circle cx="231.1" cy="289.78" r="0.75" fill="#141c10"/>
<circle cx="216.2" cy="297.2" r="2.65" fill="#d0d688"/>
<circle cx="216.2" cy="297.2" r="1.45" fill="#56643c"/>
<circle cx="216.2" cy="297.2" r="0.75" fill="#141c10"/>
<circle cx="231.1" cy="297.2" r="2.65" fill="#d0d688"/>
<circle cx="231.1" cy="297.2" r="1.45" fill="#56643c"/>
<circle cx="231.1" cy="297.2" r="0.75" fill="#141c10"/>
<circle cx="216.2" cy="304.62" r="2.65" fill="#d0d688"/>
<circle cx="216.2" cy="304.62" r="1.45" fill="#56643c"/>
<circle cx="216.2" cy="304.62" r="0.75" fill="#141c10"/>
<circle cx="231.1" cy="304.62" r="2.65" fill="#d0d688"/>
<circle cx="231.1" cy="304.62" r="1.45" fill="#56643c"/>
<circle cx="231.1" cy="304.62" r="0.75" fill="#141c10"/>
<circle cx="216.2" cy="312.04" r="2.65" fill="#d0d688"/>
<circle cx="216.2" cy="312.04" r="1.45" fill="#56643c"/>
<circle cx="216.2" cy="312.04" r="0.75" fill="#141c10"/>
<circle cx="231.1" cy="312.04" r="2.65" fill="#d0d688"/>
<circle cx="231.1" cy="312.04" r="1.45" fill="#56643c"/>
<circle cx="231.1" cy="312.04" r="0.75" fill="#141c10"/>
<circle cx="216.2" cy="319.46" r="2.65" fill="#d0d688"/>
<circle cx="216.2" cy="319.46" r="1.45" fill="#56643c"/>
<circle cx="216.2" cy="319.46" r="0.75" fill="#141c10"/>
<circle cx="231.1" cy="319.46" r="2.65" fill="#d0d688"/>
<circle cx="231.1" cy="319.46" r="1.45" fill="#56643c"/>
<circle cx="231.1" cy="319.46" r="0.75" fill="#141c10"/>
<circle cx="216.2" cy="326.88" r="2.65" fill="#d0d688"/>
<circle cx="216.2" cy="326.88" r="1.45" fill="#56643c"/>
<circle cx="216.2" cy="326.88" r="0.75" fill="#141c10"/>
<circle cx="231.1" cy="326.88" r="2.65" fill="#d0d688"/>
<circle cx="231.1" cy="326.88" r="1.45" fill="#56643c"/>
<circle cx="231.1" cy="326.88" r="0.75" fill="#141c10"/>
<circle cx="216.2" cy="334.3" r="2.65" fill="#d0d688"/>
<circle cx="216.2" cy="334.3" r="1.45" fill="#56643c"/>
<circle cx="216.2" cy="334.3" r="0.75" fill="#141c10"/>
<circle cx="231.1" cy="334.3" r="2.65" fill="#d0d688"/>
<circle cx="231.1" cy="334.3" r="1.45" fill="#56643c"/>
<circle cx="231.1" cy="334.3" r="0.75" fill="#141c10"/>
<circle cx="216.2" cy="341.72" r="2.65" fill="#d0d688"/>
<circle cx="216.2" cy="341.72" r="1.45" fill="#56643c"/>
<circle cx="216.2" cy="341.72" r="0.75" fill="#141c10"/>
<rect x="228.8" y="339.42" width="4.6" height="4.6" fill="#2c4a2c" stroke="#d4d68a" stroke-width="1.1"/>
<text x="219.75" y="172.5" font-size="10" fill="#e4ecdc" text-anchor="middle" font-weight="bold" font-family='"Liberation Sans", sans-serif' textLength="6" lengthAdjust="spacingAndGlyphs" transform="rotate(-90 219.75 172.5)" >Z</text>
<text x="234.8" y="169.5" font-size="10" fill="#e4ecdc" text-anchor="middle" font-weight="bold" font-family='"Liberation Sans", sans-serif' textLength="12.9" lengthAdjust="spacingAndGlyphs" transform="rotate(-90 234.8 169.5)" >22</text>
<text x="219.75" y="353.7" font-size="10" fill="#e4ecdc" text-anchor="middle" font-weight="bold" font-family='"Liberation Sans", sans-serif' textLength="6.5" lengthAdjust="spacingAndGlyphs" transform="rotate(-90 219.75 353.7)" >A</text>
<text x="234.65" y="353.7" font-size="10" fill="#e4ecdc" text-anchor="middle" font-weight="bold" font-family='"Liberation Sans", sans-serif' textLength="5" lengthAdjust="spacingAndGlyphs" transform="rotate(-90 234.65 353.7)" >1</text>
<text x="246.5" y="267.5" font-size="7.4" fill="#e4ecdc" text-anchor="middle" font-weight="normal" font-family='"Liberation Sans", sans-serif' textLength="40" lengthAdjust="spacingAndGlyphs" transform="rotate(-90 246.5 267.5)" >CN8 D6/D7</text>
<rect x="267.8" y="178" width="30.6" height="170.5" fill="none" stroke="#e4ecdc" stroke-width="1.2" />
<circle cx="275.4" cy="185.9" r="2.65" fill="#d0d688"/>
<circle cx="275.4" cy="185.9" r="1.45" fill="#56643c"/>
<circle cx="275.4" cy="185.9" r="0.75" fill="#141c10"/>
<circle cx="290.3" cy="185.9" r="2.65" fill="#d0d688"/>
<circle cx="290.3" cy="185.9" r="1.45" fill="#56643c"/>
<circle cx="290.3" cy="185.9" r="0.75" fill="#141c10"/>
<circle cx="275.4" cy="193.32" r="2.65" fill="#d0d688"/>
<circle cx="275.4" cy="193.32" r="1.45" fill="#56643c"/>
<circle cx="275.4" cy="193.32" r="0.75" fill="#141c10"/>
<circle cx="290.3" cy="193.32" r="2.65" fill="#d0d688"/>
<circle cx="290.3" cy="193.32" r="1.45" fill="#56643c"/>
<circle cx="290.3" cy="193.32" r="0.75" fill="#141c10"/>
<circle cx="275.4" cy="200.74" r="2.65" fill="#d0d688"/>
<circle cx="275.4" cy="200.74" r="1.45" fill="#56643c"/>
<circle cx="275.4" cy="200.74" r="0.75" fill="#141c10"/>
<circle cx="290.3" cy="200.74" r="2.65" fill="#d0d688"/>
<circle cx="290.3" cy="200.74" r="1.45" fill="#56643c"/>
<circle cx="290.3" cy="200.74" r="0.75" fill="#141c10"/>
<circle cx="275.4" cy="208.16" r="2.65" fill="#d0d688"/>
<circle cx="275.4" cy="208.16" r="1.45" fill="#56643c"/>
<circle cx="275.4" cy="208.16" r="0.75" fill="#141c10"/>
<circle cx="290.3" cy="208.16" r="2.65" fill="#d0d688"/>
<circle cx="290.3" cy="208.16" r="1.45" fill="#56643c"/>
<circle cx="290.3" cy="208.16" r="0.75" fill="#141c10"/>
<circle cx="275.4" cy="215.58" r="2.65" fill="#d0d688"/>
<circle cx="275.4" cy="215.58" r="1.45" fill="#56643c"/>
<circle cx="275.4" cy="215.58" r="0.75" fill="#141c10"/>
<circle cx="290.3" cy="215.58" r="2.65" fill="#d0d688"/>
<circle cx="290.3" cy="215.58" r="1.45" fill="#56643c"/>
<circle cx="290.3" cy="215.58" r="0.75" fill="#141c10"/>
<circle cx="275.4" cy="223" r="2.65" fill="#d0d688"/>
<circle cx="275.4" cy="223" r="1.45" fill="#56643c"/>
<circle cx="275.4" cy="223" r="0.75" fill="#141c10"/>
<circle cx="290.3" cy="223" r="2.65" fill="#d0d688"/>
<circle cx="290.3" cy="223" r="1.45" fill="#56643c"/>
<circle cx="290.3" cy="223" r="0.75" fill="#141c10"/>
<circle cx="275.4" cy="230.42" r="2.65" fill="#d0d688"/>
<circle cx="275.4" cy="230.42" r="1.45" fill="#56643c"/>
<circle cx="275.4" cy="230.42" r="0.75" fill="#141c10"/>
<circle cx="290.3" cy="230.42" r="2.65" fill="#d0d688"/>
<circle cx="290.3" cy="230.42" r="1.45" fill="#56643c"/>
<circle cx="290.3" cy="230.42" r="0.75" fill="#141c10"/>
<circle cx="275.4" cy="237.84" r="2.65" fill="#d0d688"/>
<circle cx="275.4" cy="237.84" r="1.45" fill="#56643c"/>
<circle cx="275.4" cy="237.84" r="0.75" fill="#141c10"/>
<circle cx="290.3" cy="237.84" r="2.65" fill="#d0d688"/>
<circle cx="290.3" cy="237.84" r="1.45" fill="#56643c"/>
<circle cx="290.3" cy="237.84" r="0.75" fill="#141c10"/>
<circle cx="275.4" cy="245.26" r="2.65" fill="#d0d688"/>
<circle cx="275.4" cy="245.26" r="1.45" fill="#56643c"/>
<circle cx="275.4" cy="245.26" r="0.75" fill="#141c10"/>
<circle cx="290.3" cy="245.26" r="2.65" fill="#d0d688"/>
<circle cx="290.3" cy="245.26" r="1.45" fill="#56643c"/>
<circle cx="290.3" cy="245.26" r="0.75" fill="#141c10"/>
<circle cx="275.4" cy="252.68" r="2.65" fill="#d0d688"/>
<circle cx="275.4" cy="252.68" r="1.45" fill="#56643c"/>
<circle cx="275.4" cy="252.68" r="0.75" fill="#141c10"/>
<circle cx="290.3" cy="252.68" r="2.65" fill="#d0d688"/>
<circle cx="290.3" cy="252.68" r="1.45" fill="#56643c"/>
<circle cx="290.3" cy="252.68" r="0.75" fill="#141c10"/>
<circle cx="275.4" cy="260.1" r="2.65" fill="#d0d688"/>
<circle cx="275.4" cy="260.1" r="1.45" fill="#56643c"/>
<circle cx="275.4" cy="260.1" r="0.75" fill="#141c10"/>
<circle cx="290.3" cy="260.1" r="2.65" fill="#d0d688"/>
<circle cx="290.3" cy="260.1" r="1.45" fill="#56643c"/>
<circle cx="290.3" cy="260.1" r="0.75" fill="#141c10"/>
<circle cx="275.4" cy="267.52" r="2.65" fill="#d0d688"/>
<circle cx="275.4" cy="267.52" r="1.45" fill="#56643c"/>
<circle cx="275.4" cy="267.52" r="0.75" fill="#141c10"/>
<circle cx="290.3" cy="267.52" r="2.65" fill="#d0d688"/>
<circle cx="290.3" cy="267.52" r="1.45" fill="#56643c"/>
<circle cx="290.3" cy="267.52" r="0.75" fill="#141c10"/>
<circle cx="275.4" cy="274.94" r="2.65" fill="#d0d688"/>
<circle cx="275.4" cy="274.94" r="1.45" fill="#56643c"/>
<circle cx="275.4" cy="274.94" r="0.75" fill="#141c10"/>
<circle cx="290.3" cy="274.94" r="2.65" fill="#d0d688"/>
<circle cx="290.3" cy="274.94" r="1.45" fill="#56643c"/>
<circle cx="290.3" cy="274.94" r="0.75" fill="#141c10"/>
<circle cx="275.4" cy="282.36" r="2.65" fill="#d0d688"/>
<circle cx="275.4" cy="282.36" r="1.45" fill="#56643c"/>
<circle cx="275.4" cy="282.36" r="0.75" fill="#141c10"/>
<circle cx="290.3" cy="282.36" r="2.65" fill="#d0d688"/>
<circle cx="290.3" cy="282.36" r="1.45" fill="#56643c"/>
<circle cx="290.3" cy="282.36" r="0.75" fill="#141c10"/>
<circle cx="275.4" cy="289.78" r="2.65" fill="#d0d688"/>
<circle cx="275.4" cy="289.78" r="1.45" fill="#56643c"/>
<circle cx="275.4" cy="289.78" r="0.75" fill="#141c10"/>
<circle cx="290.3" cy="289.78" r="2.65" fill="#d0d688"/>
<circle cx="290.3" cy="289.78" r="1.45" fill="#56643c"/>
<circle cx="290.3" cy="289.78" r="0.75" fill="#141c10"/>
<circle cx="275.4" cy="297.2" r="2.65" fill="#d0d688"/>
<circle cx="275.4" cy="297.2" r="1.45" fill="#56643c"/>
<circle cx="275.4" cy="297.2" r="0.75" fill="#141c10"/>
<circle cx="290.3" cy="297.2" r="2.65" fill="#d0d688"/>
<circle cx="290.3" cy="297.2" r="1.45" fill="#56643c"/>
<circle cx="290.3" cy="297.2" r="0.75" fill="#141c10"/>
<circle cx="275.4" cy="304.62" r="2.65" fill="#d0d688"/>
<circle cx="275.4" cy="304.62" r="1.45" fill="#56643c"/>
<circle cx="275.4" cy="304.62" r="0.75" fill="#141c10"/>
<circle cx="290.3" cy="304.62" r="2.65" fill="#d0d688"/>
<circle cx="290.3" cy="304.62" r="1.45" fill="#56643c"/>
<circle cx="290.3" cy="304.62" r="0.75" fill="#141c10"/>
<circle cx="275.4" cy="312.04" r="2.65" fill="#d0d688"/>
<circle cx="275.4" cy="312.04" r="1.45" fill="#56643c"/>
<circle cx="275.4" cy="312.04" r="0.75" fill="#141c10"/>
<circle cx="290.3" cy="312.04" r="2.65" fill="#d0d688"/>
<circle cx="290.3" cy="312.04" r="1.45" fill="#56643c"/>
<circle cx="290.3" cy="312.04" r="0.75" fill="#141c10"/>
<circle cx="275.4" cy="319.46" r="2.65" fill="#d0d688"/>
<circle cx="275.4" cy="319.46" r="1.45" fill="#56643c"/>
<circle cx="275.4" cy="319.46" r="0.75" fill="#141c10"/>
<circle cx="290.3" cy="319.46" r="2.65" fill="#d0d688"/>
<circle cx="290.3" cy="319.46" r="1.45" fill="#56643c"/>
<circle cx="290.3" cy="319.46" r="0.75" fill="#141c10"/>
<circle cx="275.4" cy="326.88" r="2.65" fill="#d0d688"/>
<circle cx="275.4" cy="326.88" r="1.45" fill="#56643c"/>
<circle cx="275.4" cy="326.88" r="0.75" fill="#141c10"/>
<circle cx="290.3" cy="326.88" r="2.65" fill="#d0d688"/>
<circle cx="290.3" cy="326.88" r="1.45" fill="#56643c"/>
<circle cx="290.3" cy="326.88" r="0.75" fill="#141c10"/>
<circle cx="275.4" cy="334.3" r="2.65" fill="#d0d688"/>
<circle cx="275.4" cy="334.3" r="1.45" fill="#56643c"/>
<circle cx="275.4" cy="334.3" r="0.75" fill="#141c10"/>
<circle cx="290.3" cy="334.3" r="2.65" fill="#d0d688"/>
<circle cx="290.3" cy="334.3" r="1.45" fill="#56643c"/>
<circle cx="290.3" cy="334.3" r="0.75" fill="#141c10"/>
<circle cx="275.4" cy="341.72" r="2.65" fill="#d0d688"/>
<circle cx="275.4" cy="341.72" r="1.45" fill="#56643c"/>
<circle cx="275.4" cy="341.72" r="0.75" fill="#141c10"/>
<rect x="288" y="339.42" width="4.6" height="4.6" fill="#2c4a2c" stroke="#d4d68a" stroke-width="1.1"/>
<text x="278.95" y="172.5" font-size="10" fill="#e4ecdc" text-anchor="middle" font-weight="bold" font-family='"Liberation Sans", sans-serif' textLength="6" lengthAdjust="spacingAndGlyphs" transform="rotate(-90 278.95 172.5)" >Z</text>
<text x="294" y="169.5" font-size="10" fill="#e4ecdc" text-anchor="middle" font-weight="bold" font-family='"Liberation Sans", sans-serif' textLength="12.9" lengthAdjust="spacingAndGlyphs" transform="rotate(-90 294 169.5)" >22</text>
<text x="278.95" y="353.7" font-size="10" fill="#e4ecdc" text-anchor="middle" font-weight="bold" font-family='"Liberation Sans", sans-serif' textLength="6.5" lengthAdjust="spacingAndGlyphs" transform="rotate(-90 278.95 353.7)" >A</text>
<text x="293.85" y="353.7" font-size="10" fill="#e4ecdc" text-anchor="middle" font-weight="bold" font-family='"Liberation Sans", sans-serif' textLength="5" lengthAdjust="spacingAndGlyphs" transform="rotate(-90 293.85 353.7)" >1</text>
<text x="305.7" y="267.5" font-size="7.4" fill="#e4ecdc" text-anchor="middle" font-weight="normal" font-family='"Liberation Sans", sans-serif' textLength="40" lengthAdjust="spacingAndGlyphs" transform="rotate(-90 305.7 267.5)" >CN9 D6/D7</text>
<rect x="334.8" y="157.4" width="91.2" height="30.3" fill="#58574f" />
<rect x="343.2" y="166" width="34.6" height="12" fill="#2e4a36" />
<rect x="384.8" y="166" width="33.4" height="12" fill="#2e4a36" />
<circle cx="338.3" cy="160.9" r="2.6" fill="#d6d4cc" />
<circle cx="338.3" cy="160.9" r="1.1" fill="#6a6460" />
<circle cx="338.3" cy="183.3" r="2.6" fill="#d6d4cc" />
<circle cx="338.3" cy="183.3" r="1.1" fill="#6a6460" />
<circle cx="345.88" cy="160.9" r="2.6" fill="#d6d4cc" />
<circle cx="345.88" cy="160.9" r="1.1" fill="#6a6460" />
<circle cx="345.88" cy="183.3" r="2.6" fill="#d6d4cc" />
<circle cx="345.88" cy="183.3" r="1.1" fill="#6a6460" />
<circle cx="353.46" cy="160.9" r="2.6" fill="#d6d4cc" />
<circle cx="353.46" cy="160.9" r="1.1" fill="#6a6460" />
<circle cx="353.46" cy="183.3" r="2.6" fill="#d6d4cc" />
<circle cx="353.46" cy="183.3" r="1.1" fill="#6a6460" />
<circle cx="361.04" cy="160.9" r="2.6" fill="#d6d4cc" />
<circle cx="361.04" cy="160.9" r="1.1" fill="#6a6460" />
<circle cx="361.04" cy="183.3" r="2.6" fill="#d6d4cc" />
<circle cx="361.04" cy="183.3" r="1.1" fill="#6a6460" />
<circle cx="368.62" cy="160.9" r="2.6" fill="#d6d4cc" />
<circle cx="368.62" cy="160.9" r="1.1" fill="#6a6460" />
<circle cx="368.62" cy="183.3" r="2.6" fill="#d6d4cc" />
<circle cx="368.62" cy="183.3" r="1.1" fill="#6a6460" />
<circle cx="376.2" cy="160.9" r="2.6" fill="#d6d4cc" />
<circle cx="376.2" cy="160.9" r="1.1" fill="#6a6460" />
<circle cx="376.2" cy="183.3" r="2.6" fill="#d6d4cc" />
<circle cx="376.2" cy="183.3" r="1.1" fill="#6a6460" />
<circle cx="383.78" cy="160.9" r="2.6" fill="#d6d4cc" />
<circle cx="383.78" cy="160.9" r="1.1" fill="#6a6460" />
<circle cx="383.78" cy="183.3" r="2.6" fill="#d6d4cc" />
<circle cx="383.78" cy="183.3" r="1.1" fill="#6a6460" />
<circle cx="391.36" cy="160.9" r="2.6" fill="#d6d4cc" />
<circle cx="391.36" cy="160.9" r="1.1" fill="#6a6460" />
<circle cx="391.36" cy="183.3" r="2.6" fill="#d6d4cc" />
<circle cx="391.36" cy="183.3" r="1.1" fill="#6a6460" />
<circle cx="398.94" cy="160.9" r="2.6" fill="#d6d4cc" />
<circle cx="398.94" cy="160.9" r="1.1" fill="#6a6460" />
<circle cx="398.94" cy="183.3" r="2.6" fill="#d6d4cc" />
<circle cx="398.94" cy="183.3" r="1.1" fill="#6a6460" />
<circle cx="406.52" cy="160.9" r="2.6" fill="#d6d4cc" />
<circle cx="406.52" cy="160.9" r="1.1" fill="#6a6460" />
<circle cx="406.52" cy="183.3" r="2.6" fill="#d6d4cc" />
<circle cx="406.52" cy="183.3" r="1.1" fill="#6a6460" />
<circle cx="414.1" cy="160.9" r="2.6" fill="#d6d4cc" />
<circle cx="414.1" cy="160.9" r="1.1" fill="#6a6460" />
<circle cx="414.1" cy="183.3" r="2.6" fill="#d6d4cc" />
<circle cx="414.1" cy="183.3" r="1.1" fill="#6a6460" />
<circle cx="421.68" cy="160.9" r="2.6" fill="#d6d4cc" />
<circle cx="421.68" cy="160.9" r="1.1" fill="#6a6460" />
<circle cx="421.68" cy="183.3" r="2.6" fill="#d6d4cc" />
<circle cx="421.68" cy="183.3" r="1.1" fill="#6a6460" />
<path d="M332.2 156 V189.3 H426" fill="none" stroke="#e4ecdc" stroke-width="0.9" opacity="0.8"/>
<text x="332.5" y="172.5" font-size="3.8" fill="#e4ecdc" text-anchor="middle" font-weight="normal" font-family='"Liberation Sans", sans-serif' transform="rotate(-90 332.5 172.5)" >SOCKET/U18</text>
<rect x="320.4" y="165.4" width="7.4" height="15.8" fill="none" stroke="#c8c8a0" stroke-width="0.8" />
<rect x="320.6" y="165.9" width="7" height="14.8" rx="2" fill="#b9683a"/>
<text x="318.7" y="173.3" font-size="4.6" fill="#e4ecdc" text-anchor="middle" font-weight="bold" font-family='"Liberation Sans", sans-serif' textLength="10" lengthAdjust="spacingAndGlyphs" transform="rotate(-90 318.7 173.3)" >DC11</text>
<rect x="341" y="196" width="38.6" height="17" fill="#4d4844" />
<circle cx="346.2" cy="198.8" r="1.2" fill="#d8d4cc" />
<circle cx="346.2" cy="207" r="1.2" fill="#d8d4cc" />
<circle cx="353.8" cy="198.8" r="1.2" fill="#d8d4cc" />
<circle cx="353.8" cy="207" r="1.2" fill="#d8d4cc" />
<circle cx="361.5" cy="198.8" r="1.2" fill="#d8d4cc" />
<circle cx="361.5" cy="207" r="1.2" fill="#d8d4cc" />
<circle cx="369.6" cy="198.8" r="1.2" fill="#d8d4cc" />
<circle cx="369.6" cy="207" r="1.2" fill="#d8d4cc" />
<circle cx="377.3" cy="198.8" r="1.2" fill="#d8d4cc" />
<circle cx="377.3" cy="207" r="1.2" fill="#d8d4cc" />
<text x="345" y="195" font-size="4.6" fill="#e4ecdc" text-anchor="middle" font-weight="bold" font-family='"Liberation Sans", sans-serif' textLength="4.2" lengthAdjust="spacingAndGlyphs" >K0</text>
<text x="353.8" y="195" font-size="4.6" fill="#e4ecdc" text-anchor="middle" font-weight="bold" font-family='"Liberation Sans", sans-serif' textLength="4.2" lengthAdjust="spacingAndGlyphs" >K1</text>
<text x="361.8" y="195" font-size="4.6" fill="#e4ecdc" text-anchor="middle" font-weight="bold" font-family='"Liberation Sans", sans-serif' textLength="4.2" lengthAdjust="spacingAndGlyphs" >C0</text>
<text x="369.6" y="195" font-size="4.6" fill="#e4ecdc" text-anchor="middle" font-weight="bold" font-family='"Liberation Sans", sans-serif' textLength="4.2" lengthAdjust="spacingAndGlyphs" >C1</text>
<text x="377.7" y="195" font-size="4.6" fill="#e4ecdc" text-anchor="middle" font-weight="bold" font-family='"Liberation Sans", sans-serif' textLength="4.2" lengthAdjust="spacingAndGlyphs" >B0</text>
<text x="339.2" y="204.5" font-size="3.8" fill="#e4ecdc" text-anchor="middle" font-weight="normal" font-family='"Liberation Sans", sans-serif' transform="rotate(-90 339.2 204.5)" >EEPROM</text>
<text x="404.5" y="215.8" font-size="4.5" fill="#e4ecdc" text-anchor="middle" font-weight="bold" font-family='"Liberation Mono", monospace' >DC15</text>
<rect x="397.3" y="217.3" width="15.2" height="8.1" fill="none" stroke="#e4ecdc" stroke-width="0.9" />
<ellipse cx="405.5" cy="221.3" rx="6" ry="3.6" fill="#35b035"/>
<path d="M399 219 L402.5 222.5 L400 223.5 Z" fill="#ddd"/>
<text x="404.5" y="229.6" font-size="4.6" fill="#e4ecdc" text-anchor="middle" font-weight="bold" font-family='"Liberation Sans", sans-serif' textLength="12" lengthAdjust="spacingAndGlyphs" >2IC5EZ</text>
<rect x="374.9" y="232.9" width="59.9" height="103.8" fill="none" stroke="#e4ecdc" stroke-width="1.3" />
<rect x="387.8" y="233.4" width="37.7" height="103.3" fill="#625e5a" />
<rect x="385.8" y="233.4" width="2" height="103.3" fill="#111" />
<rect x="380" y="234.45" width="5.8" height="4.3" fill="#eef0e2" />
<circle cx="382" cy="236.6" r="1.2" fill="#2a3420" />
<rect x="426.3" y="234.4" width="3.2" height="4.4" fill="#eeeeea" />
<rect x="380" y="241.84" width="5.8" height="4.3" fill="#eef0e2" />
<circle cx="382" cy="243.99" r="1.2" fill="#2a3420" />
<rect x="426.3" y="241.79" width="3.2" height="4.4" fill="#eeeeea" />
<rect x="380" y="249.23" width="5.8" height="4.3" fill="#eef0e2" />
<circle cx="382" cy="251.38" r="1.2" fill="#2a3420" />
<rect x="426.3" y="249.18" width="3.2" height="4.4" fill="#eeeeea" />
<rect x="380" y="256.62" width="5.8" height="4.3" fill="#eef0e2" />
<circle cx="382" cy="258.77" r="1.2" fill="#2a3420" />
<rect x="426.3" y="256.57" width="3.2" height="4.4" fill="#eeeeea" />
<rect x="380" y="264.01" width="5.8" height="4.3" fill="#eef0e2" />
<circle cx="382" cy="266.16" r="1.2" fill="#2a3420" />
<rect x="426.3" y="263.96" width="3.2" height="4.4" fill="#eeeeea" />
<rect x="380" y="271.4" width="5.8" height="4.3" fill="#eef0e2" />
<circle cx="382" cy="273.55" r="1.2" fill="#2a3420" />
<rect x="426.3" y="271.35" width="3.2" height="4.4" fill="#eeeeea" />
<rect x="380" y="278.79" width="5.8" height="4.3" fill="#eef0e2" />
<circle cx="382" cy="280.94" r="1.2" fill="#2a3420" />
<rect x="426.3" y="278.74" width="3.2" height="4.4" fill="#eeeeea" />
<rect x="380" y="286.18" width="5.8" height="4.3" fill="#eef0e2" />
<circle cx="382" cy="288.33" r="1.2" fill="#2a3420" />
<rect x="426.3" y="286.13" width="3.2" height="4.4" fill="#eeeeea" />
<rect x="380" y="293.57" width="5.8" height="4.3" fill="#eef0e2" />
<circle cx="382" cy="295.72" r="1.2" fill="#2a3420" />
<rect x="426.3" y="293.52" width="3.2" height="4.4" fill="#eeeeea" />
<rect x="380" y="300.96" width="5.8" height="4.3" fill="#eef0e2" />
<circle cx="382" cy="303.11" r="1.2" fill="#2a3420" />
<rect x="426.3" y="300.91" width="3.2" height="4.4" fill="#eeeeea" />
<rect x="380" y="308.35" width="5.8" height="4.3" fill="#eef0e2" />
<circle cx="382" cy="310.5" r="1.2" fill="#2a3420" />
<rect x="426.3" y="308.3" width="3.2" height="4.4" fill="#eeeeea" />
<rect x="380" y="315.74" width="5.8" height="4.3" fill="#eef0e2" />
<circle cx="382" cy="317.89" r="1.2" fill="#2a3420" />
<rect x="426.3" y="315.69" width="3.2" height="4.4" fill="#eeeeea" />
<rect x="380" y="323.13" width="5.8" height="4.3" fill="#eef0e2" />
<circle cx="382" cy="325.28" r="1.2" fill="#2a3420" />
<rect x="426.3" y="323.08" width="3.2" height="4.4" fill="#eeeeea" />
<rect x="380" y="330.52" width="5.8" height="4.3" fill="#eef0e2" />
<circle cx="382" cy="332.67" r="1.2" fill="#2a3420" />
<rect x="426.3" y="330.47" width="3.2" height="4.4" fill="#eeeeea" />
<text x="530.7" y="188.5" font-size="4.6" fill="#e4ecdc" text-anchor="middle" font-weight="bold" font-family='"Liberation Mono", monospace' >MOS6510</text>
<rect x="501.3" y="193.8" width="59.7" height="148.8" fill="none" stroke="#e4ecdc" stroke-width="1.3" />
<rect x="516.5" y="194.3" width="37.1" height="148.3" fill="#505050" />
<rect x="514.2" y="194.3" width="2.3" height="148.3" fill="#111" />
<rect x="511" y="195.6" width="3.2" height="4.4" fill="#f4f4f0" />
<rect x="506.2" y="195.5" width="4.6" height="4.6" fill="#2a3a22" stroke="#c8dc90" stroke-width="1.2"/>
<rect x="554.4" y="195.6" width="2.4" height="4.4" fill="#eeeeea" />
<rect x="511" y="203.02" width="3.2" height="4.4" fill="#f4f4f0" />
<path d="M510.4 202.92 A2.4 2.4 0 1 0 510.4 207.52" fill="none" stroke="#c8dc90" stroke-width="1.3"/>
<rect x="554.4" y="203.02" width="2.4" height="4.4" fill="#eeeeea" />
<rect x="511" y="210.44" width="3.2" height="4.4" fill="#f4f4f0" />
<path d="M510.4 210.34 A2.4 2.4 0 1 0 510.4 214.94" fill="none" stroke="#c8dc90" stroke-width="1.3"/>
<rect x="554.4" y="210.44" width="2.4" height="4.4" fill="#eeeeea" />
<rect x="511" y="217.86" width="3.2" height="4.4" fill="#f4f4f0" />
<path d="M510.4 217.76 A2.4 2.4 0 1 0 510.4 222.36" fill="none" stroke="#c8dc90" stroke-width="1.3"/>
<rect x="554.4" y="217.86" width="2.4" height="4.4" fill="#eeeeea" />
<rect x="511" y="225.28" width="3.2" height="4.4" fill="#f4f4f0" />
<path d="M510.4 225.18 A2.4 2.4 0 1 0 510.4 229.78" fill="none" stroke="#c8dc90" stroke-width="1.3"/>
<rect x="554.4" y="225.28" width="2.4" height="4.4" fill="#eeeeea" />
<rect x="511" y="232.7" width="3.2" height="4.4" fill="#f4f4f0" />
<path d="M510.4 232.6 A2.4 2.4 0 1 0 510.4 237.2" fill="none" stroke="#c8dc90" stroke-width="1.3"/>
<rect x="554.4" y="232.7" width="2.4" height="4.4" fill="#eeeeea" />
<rect x="511" y="240.12" width="3.2" height="4.4" fill="#f4f4f0" />
<path d="M510.4 240.02 A2.4 2.4 0 1 0 510.4 244.62" fill="none" stroke="#c8dc90" stroke-width="1.3"/>
<rect x="554.4" y="240.12" width="2.4" height="4.4" fill="#eeeeea" />
<rect x="511" y="247.54" width="3.2" height="4.4" fill="#f4f4f0" />
<path d="M510.4 247.44 A2.4 2.4 0 1 0 510.4 252.04" fill="none" stroke="#c8dc90" stroke-width="1.3"/>
<rect x="554.4" y="247.54" width="2.4" height="4.4" fill="#eeeeea" />
<rect x="511" y="254.96" width="3.2" height="4.4" fill="#f4f4f0" />
<path d="M510.4 254.86 A2.4 2.4 0 1 0 510.4 259.46" fill="none" stroke="#c8dc90" stroke-width="1.3"/>
<rect x="554.4" y="254.96" width="2.4" height="4.4" fill="#eeeeea" />
<rect x="511" y="262.38" width="3.2" height="4.4" fill="#f4f4f0" />
<path d="M510.4 262.28 A2.4 2.4 0 1 0 510.4 266.88" fill="none" stroke="#c8dc90" stroke-width="1.3"/>
<rect x="554.4" y="262.38" width="2.4" height="4.4" fill="#eeeeea" />
<rect x="511" y="269.8" width="3.2" height="4.4" fill="#f4f4f0" />
<path d="M510.4 269.7 A2.4 2.4 0 1 0 510.4 274.3" fill="none" stroke="#c8dc90" stroke-width="1.3"/>
<rect x="554.4" y="269.8" width="2.4" height="4.4" fill="#eeeeea" />
<rect x="511" y="277.22" width="3.2" height="4.4" fill="#f4f4f0" />
<path d="M510.4 277.12 A2.4 2.4 0 1 0 510.4 281.72" fill="none" stroke="#c8dc90" stroke-width="1.3"/>
<rect x="554.4" y="277.22" width="2.4" height="4.4" fill="#eeeeea" />
<rect x="511" y="284.64" width="3.2" height="4.4" fill="#f4f4f0" />
<path d="M510.4 284.54 A2.4 2.4 0 1 0 510.4 289.14" fill="none" stroke="#c8dc90" stroke-width="1.3"/>
<rect x="554.4" y="284.64" width="2.4" height="4.4" fill="#eeeeea" />
<rect x="511" y="292.06" width="3.2" height="4.4" fill="#f4f4f0" />
<path d="M510.4 291.96 A2.4 2.4 0 1 0 510.4 296.56" fill="none" stroke="#c8dc90" stroke-width="1.3"/>
<rect x="554.4" y="292.06" width="2.4" height="4.4" fill="#eeeeea" />
<rect x="511" y="299.48" width="3.2" height="4.4" fill="#f4f4f0" />
<path d="M510.4 299.38 A2.4 2.4 0 1 0 510.4 303.98" fill="none" stroke="#c8dc90" stroke-width="1.3"/>
<rect x="554.4" y="299.48" width="2.4" height="4.4" fill="#eeeeea" />
<rect x="511" y="306.9" width="3.2" height="4.4" fill="#f4f4f0" />
<path d="M510.4 306.8 A2.4 2.4 0 1 0 510.4 311.4" fill="none" stroke="#c8dc90" stroke-width="1.3"/>
<rect x="554.4" y="306.9" width="2.4" height="4.4" fill="#eeeeea" />
<rect x="511" y="314.32" width="3.2" height="4.4" fill="#f4f4f0" />
<path d="M510.4 314.22 A2.4 2.4 0 1 0 510.4 318.82" fill="none" stroke="#c8dc90" stroke-width="1.3"/>
<rect x="554.4" y="314.32" width="2.4" height="4.4" fill="#eeeeea" />
<rect x="511" y="321.74" width="3.2" height="4.4" fill="#f4f4f0" />
<path d="M510.4 321.64 A2.4 2.4 0 1 0 510.4 326.24" fill="none" stroke="#c8dc90" stroke-width="1.3"/>
<rect x="554.4" y="321.74" width="2.4" height="4.4" fill="#eeeeea" />
<rect x="511" y="329.16" width="3.2" height="4.4" fill="#f4f4f0" />
<path d="M510.4 329.06 A2.4 2.4 0 1 0 510.4 333.66" fill="none" stroke="#c8dc90" stroke-width="1.3"/>
<rect x="554.4" y="329.16" width="2.4" height="4.4" fill="#eeeeea" />
<rect x="511" y="336.58" width="3.2" height="4.4" fill="#f4f4f0" />
<path d="M510.4 336.48 A2.4 2.4 0 1 0 510.4 341.08" fill="none" stroke="#c8dc90" stroke-width="1.3"/>
<rect x="554.4" y="336.58" width="2.4" height="4.4" fill="#eeeeea" />
<text x="630" y="184.5" font-size="4.6" fill="#e4ecdc" text-anchor="middle" font-weight="bold" font-family='"Liberation Mono", monospace' >MOS6526-1</text>
<rect x="600.5" y="193.5" width="59.9" height="149.1" fill="none" stroke="#e4ecdc" stroke-width="1.3" />
<rect x="618.4" y="194" width="37" height="148.6" fill="#505050" />
<rect x="615.6" y="194" width="2.8" height="148.6" fill="#111" />
<rect x="611.4" y="195.4" width="4.2" height="4.4" fill="#f4f4f0" />
<rect x="606.6" y="195.3" width="4.6" height="4.6" fill="#2a3a22" stroke="#c8dc90" stroke-width="1.2"/>
<rect x="656.2" y="195.4" width="2.4" height="4.4" fill="#eeeeea" />
<rect x="611.4" y="202.82" width="4.2" height="4.4" fill="#f4f4f0" />
<path d="M610.8 202.72 A2.4 2.4 0 1 0 610.8 207.32" fill="none" stroke="#c8dc90" stroke-width="1.3"/>
<rect x="656.2" y="202.82" width="2.4" height="4.4" fill="#eeeeea" />
<rect x="611.4" y="210.24" width="4.2" height="4.4" fill="#f4f4f0" />
<path d="M610.8 210.14 A2.4 2.4 0 1 0 610.8 214.74" fill="none" stroke="#c8dc90" stroke-width="1.3"/>
<rect x="656.2" y="210.24" width="2.4" height="4.4" fill="#eeeeea" />
<rect x="611.4" y="217.66" width="4.2" height="4.4" fill="#f4f4f0" />
<path d="M610.8 217.56 A2.4 2.4 0 1 0 610.8 222.16" fill="none" stroke="#c8dc90" stroke-width="1.3"/>
<rect x="656.2" y="217.66" width="2.4" height="4.4" fill="#eeeeea" />
<rect x="611.4" y="225.08" width="4.2" height="4.4" fill="#f4f4f0" />
<path d="M610.8 224.98 A2.4 2.4 0 1 0 610.8 229.58" fill="none" stroke="#c8dc90" stroke-width="1.3"/>
<rect x="656.2" y="225.08" width="2.4" height="4.4" fill="#eeeeea" />
<rect x="611.4" y="232.5" width="4.2" height="4.4" fill="#f4f4f0" />
<path d="M610.8 232.4 A2.4 2.4 0 1 0 610.8 237" fill="none" stroke="#c8dc90" stroke-width="1.3"/>
<rect x="656.2" y="232.5" width="2.4" height="4.4" fill="#eeeeea" />
<rect x="611.4" y="239.92" width="4.2" height="4.4" fill="#f4f4f0" />
<path d="M610.8 239.82 A2.4 2.4 0 1 0 610.8 244.42" fill="none" stroke="#c8dc90" stroke-width="1.3"/>
<rect x="656.2" y="239.92" width="2.4" height="4.4" fill="#eeeeea" />
<rect x="611.4" y="247.34" width="4.2" height="4.4" fill="#f4f4f0" />
<path d="M610.8 247.24 A2.4 2.4 0 1 0 610.8 251.84" fill="none" stroke="#c8dc90" stroke-width="1.3"/>
<rect x="656.2" y="247.34" width="2.4" height="4.4" fill="#eeeeea" />
<rect x="611.4" y="254.76" width="4.2" height="4.4" fill="#f4f4f0" />
<path d="M610.8 254.66 A2.4 2.4 0 1 0 610.8 259.26" fill="none" stroke="#c8dc90" stroke-width="1.3"/>
<rect x="656.2" y="254.76" width="2.4" height="4.4" fill="#eeeeea" />
<rect x="611.4" y="262.18" width="4.2" height="4.4" fill="#f4f4f0" />
<path d="M610.8 262.08 A2.4 2.4 0 1 0 610.8 266.68" fill="none" stroke="#c8dc90" stroke-width="1.3"/>
<rect x="656.2" y="262.18" width="2.4" height="4.4" fill="#eeeeea" />
<rect x="611.4" y="269.6" width="4.2" height="4.4" fill="#f4f4f0" />
<path d="M610.8 269.5 A2.4 2.4 0 1 0 610.8 274.1" fill="none" stroke="#c8dc90" stroke-width="1.3"/>
<rect x="656.2" y="269.6" width="2.4" height="4.4" fill="#eeeeea" />
<rect x="611.4" y="277.02" width="4.2" height="4.4" fill="#f4f4f0" />
<path d="M610.8 276.92 A2.4 2.4 0 1 0 610.8 281.52" fill="none" stroke="#c8dc90" stroke-width="1.3"/>
<rect x="656.2" y="277.02" width="2.4" height="4.4" fill="#eeeeea" />
<rect x="611.4" y="284.44" width="4.2" height="4.4" fill="#f4f4f0" />
<path d="M610.8 284.34 A2.4 2.4 0 1 0 610.8 288.94" fill="none" stroke="#c8dc90" stroke-width="1.3"/>
<rect x="656.2" y="284.44" width="2.4" height="4.4" fill="#eeeeea" />
<rect x="611.4" y="291.86" width="4.2" height="4.4" fill="#f4f4f0" />
<path d="M610.8 291.76 A2.4 2.4 0 1 0 610.8 296.36" fill="none" stroke="#c8dc90" stroke-width="1.3"/>
<rect x="656.2" y="291.86" width="2.4" height="4.4" fill="#eeeeea" />
<rect x="611.4" y="299.28" width="4.2" height="4.4" fill="#f4f4f0" />
<path d="M610.8 299.18 A2.4 2.4 0 1 0 610.8 303.78" fill="none" stroke="#c8dc90" stroke-width="1.3"/>
<rect x="656.2" y="299.28" width="2.4" height="4.4" fill="#eeeeea" />
<rect x="611.4" y="306.7" width="4.2" height="4.4" fill="#f4f4f0" />
<path d="M610.8 306.6 A2.4 2.4 0 1 0 610.8 311.2" fill="none" stroke="#c8dc90" stroke-width="1.3"/>
<rect x="656.2" y="306.7" width="2.4" height="4.4" fill="#eeeeea" />
<rect x="611.4" y="314.12" width="4.2" height="4.4" fill="#f4f4f0" />
<path d="M610.8 314.02 A2.4 2.4 0 1 0 610.8 318.62" fill="none" stroke="#c8dc90" stroke-width="1.3"/>
<rect x="656.2" y="314.12" width="2.4" height="4.4" fill="#eeeeea" />
<rect x="611.4" y="321.54" width="4.2" height="4.4" fill="#f4f4f0" />
<path d="M610.8 321.44 A2.4 2.4 0 1 0 610.8 326.04" fill="none" stroke="#c8dc90" stroke-width="1.3"/>
<rect x="656.2" y="321.54" width="2.4" height="4.4" fill="#eeeeea" />
<rect x="611.4" y="328.96" width="4.2" height="4.4" fill="#f4f4f0" />
<path d="M610.8 328.86 A2.4 2.4 0 1 0 610.8 333.46" fill="none" stroke="#c8dc90" stroke-width="1.3"/>
<rect x="656.2" y="328.96" width="2.4" height="4.4" fill="#eeeeea" />
<rect x="611.4" y="336.38" width="4.2" height="4.4" fill="#f4f4f0" />
<path d="M610.8 336.28 A2.4 2.4 0 1 0 610.8 340.88" fill="none" stroke="#c8dc90" stroke-width="1.3"/>
<rect x="656.2" y="336.38" width="2.4" height="4.4" fill="#eeeeea" />
<rect x="686" y="193.5" width="74" height="149" fill="none" stroke="#e4ecdc" stroke-width="1.2" />
<rect x="704.5" y="194" width="20" height="148.5" fill="#505250" />
<rect x="701.3" y="194" width="3.2" height="148.5" fill="#111" />
<rect x="697.5" y="195.4" width="3.8" height="4.4" fill="#f4f4f0" />
<path d="M696.9 195.3 A2.4 2.4 0 1 0 696.9 199.9" fill="none" stroke="#d4d68a" stroke-width="1.1"/>
<rect x="697.5" y="202.82" width="3.8" height="4.4" fill="#f4f4f0" />
<path d="M696.9 202.72 A2.4 2.4 0 1 0 696.9 207.32" fill="none" stroke="#d4d68a" stroke-width="1.1"/>
<rect x="697.5" y="210.24" width="3.8" height="4.4" fill="#f4f4f0" />
<path d="M696.9 210.14 A2.4 2.4 0 1 0 696.9 214.74" fill="none" stroke="#d4d68a" stroke-width="1.1"/>
<rect x="697.5" y="217.66" width="3.8" height="4.4" fill="#f4f4f0" />
<path d="M696.9 217.56 A2.4 2.4 0 1 0 696.9 222.16" fill="none" stroke="#d4d68a" stroke-width="1.1"/>
<rect x="697.5" y="225.08" width="3.8" height="4.4" fill="#f4f4f0" />
<path d="M696.9 224.98 A2.4 2.4 0 1 0 696.9 229.58" fill="none" stroke="#d4d68a" stroke-width="1.1"/>
<rect x="697.5" y="232.5" width="3.8" height="4.4" fill="#f4f4f0" />
<path d="M696.9 232.4 A2.4 2.4 0 1 0 696.9 237" fill="none" stroke="#d4d68a" stroke-width="1.1"/>
<rect x="697.5" y="239.92" width="3.8" height="4.4" fill="#f4f4f0" />
<path d="M696.9 239.82 A2.4 2.4 0 1 0 696.9 244.42" fill="none" stroke="#d4d68a" stroke-width="1.1"/>
<rect x="697.5" y="247.34" width="3.8" height="4.4" fill="#f4f4f0" />
<path d="M696.9 247.24 A2.4 2.4 0 1 0 696.9 251.84" fill="none" stroke="#d4d68a" stroke-width="1.1"/>
<rect x="697.5" y="254.76" width="3.8" height="4.4" fill="#f4f4f0" />
<path d="M696.9 254.66 A2.4 2.4 0 1 0 696.9 259.26" fill="none" stroke="#d4d68a" stroke-width="1.1"/>
<rect x="697.5" y="262.18" width="3.8" height="4.4" fill="#f4f4f0" />
<path d="M696.9 262.08 A2.4 2.4 0 1 0 696.9 266.68" fill="none" stroke="#d4d68a" stroke-width="1.1"/>
<rect x="697.5" y="269.6" width="3.8" height="4.4" fill="#f4f4f0" />
<path d="M696.9 269.5 A2.4 2.4 0 1 0 696.9 274.1" fill="none" stroke="#d4d68a" stroke-width="1.1"/>
<rect x="697.5" y="277.02" width="3.8" height="4.4" fill="#f4f4f0" />
<path d="M696.9 276.92 A2.4 2.4 0 1 0 696.9 281.52" fill="none" stroke="#d4d68a" stroke-width="1.1"/>
<rect x="697.5" y="284.44" width="3.8" height="4.4" fill="#f4f4f0" />
<path d="M696.9 284.34 A2.4 2.4 0 1 0 696.9 288.94" fill="none" stroke="#d4d68a" stroke-width="1.1"/>
<rect x="697.5" y="291.86" width="3.8" height="4.4" fill="#f4f4f0" />
<path d="M696.9 291.76 A2.4 2.4 0 1 0 696.9 296.36" fill="none" stroke="#d4d68a" stroke-width="1.1"/>
<rect x="697.5" y="299.28" width="3.8" height="4.4" fill="#f4f4f0" />
<path d="M696.9 299.18 A2.4 2.4 0 1 0 696.9 303.78" fill="none" stroke="#d4d68a" stroke-width="1.1"/>
<rect x="697.5" y="306.7" width="3.8" height="4.4" fill="#f4f4f0" />
<path d="M696.9 306.6 A2.4 2.4 0 1 0 696.9 311.2" fill="none" stroke="#d4d68a" stroke-width="1.1"/>
<rect x="697.5" y="314.12" width="3.8" height="4.4" fill="#f4f4f0" />
<path d="M696.9 314.02 A2.4 2.4 0 1 0 696.9 318.62" fill="none" stroke="#d4d68a" stroke-width="1.1"/>
<rect x="697.5" y="321.54" width="3.8" height="4.4" fill="#f4f4f0" />
<path d="M696.9 321.44 A2.4 2.4 0 1 0 696.9 326.04" fill="none" stroke="#d4d68a" stroke-width="1.1"/>
<rect x="697.5" y="328.96" width="3.8" height="4.4" fill="#f4f4f0" />
<path d="M696.9 328.86 A2.4 2.4 0 1 0 696.9 333.46" fill="none" stroke="#d4d68a" stroke-width="1.1"/>
<rect x="697.5" y="336.38" width="3.8" height="4.4" fill="#f4f4f0" />
<path d="M696.9 336.28 A2.4 2.4 0 1 0 696.9 340.88" fill="none" stroke="#d4d68a" stroke-width="1.1"/>
<rect x="447.1" y="154.7" width="158" height="8.5" fill="#5a544e" />
<path d="M451 162.5 L455 156" stroke="#403a34" stroke-width="1.6"/>
<circle cx="455.7" cy="155.4" r="1.1" fill="#e0e0d8" />
<path d="M458.8 162.5 L462.8 156" stroke="#403a34" stroke-width="1.6"/>
<circle cx="463.5" cy="155.4" r="1.1" fill="#e0e0d8" />
<path d="M466.6 162.5 L470.6 156" stroke="#403a34" stroke-width="1.6"/>
<circle cx="471.3" cy="155.4" r="1.1" fill="#e0e0d8" />
<path d="M474.4 162.5 L478.4 156" stroke="#403a34" stroke-width="1.6"/>
<circle cx="479.1" cy="155.4" r="1.1" fill="#e0e0d8" />
<path d="M482.2 162.5 L486.2 156" stroke="#403a34" stroke-width="1.6"/>
<circle cx="486.9" cy="155.4" r="1.1" fill="#e0e0d8" />
<path d="M490 162.5 L494 156" stroke="#403a34" stroke-width="1.6"/>
<circle cx="494.7" cy="155.4" r="1.1" fill="#e0e0d8" />
<path d="M497.8 162.5 L501.8 156" stroke="#403a34" stroke-width="1.6"/>
<circle cx="502.5" cy="155.4" r="1.1" fill="#e0e0d8" />
<path d="M505.6 162.5 L509.6 156" stroke="#403a34" stroke-width="1.6"/>
<circle cx="510.3" cy="155.4" r="1.1" fill="#e0e0d8" />
<path d="M513.4 162.5 L517.4 156" stroke="#403a34" stroke-width="1.6"/>
<circle cx="518.1" cy="155.4" r="1.1" fill="#e0e0d8" />
<path d="M521.2 162.5 L525.2 156" stroke="#403a34" stroke-width="1.6"/>
<circle cx="525.9" cy="155.4" r="1.1" fill="#e0e0d8" />
<path d="M529 162.5 L533 156" stroke="#403a34" stroke-width="1.6"/>
<circle cx="533.7" cy="155.4" r="1.1" fill="#e0e0d8" />
<path d="M536.8 162.5 L540.8 156" stroke="#403a34" stroke-width="1.6"/>
<circle cx="541.5" cy="155.4" r="1.1" fill="#e0e0d8" />
<path d="M544.6 162.5 L548.6 156" stroke="#403a34" stroke-width="1.6"/>
<circle cx="549.3" cy="155.4" r="1.1" fill="#e0e0d8" />
<path d="M552.4 162.5 L556.4 156" stroke="#403a34" stroke-width="1.6"/>
<circle cx="557.1" cy="155.4" r="1.1" fill="#e0e0d8" />
<path d="M560.2 162.5 L564.2 156" stroke="#403a34" stroke-width="1.6"/>
<circle cx="564.9" cy="155.4" r="1.1" fill="#e0e0d8" />
<path d="M568 162.5 L572 156" stroke="#403a34" stroke-width="1.6"/>
<circle cx="572.7" cy="155.4" r="1.1" fill="#e0e0d8" />
<path d="M575.8 162.5 L579.8 156" stroke="#403a34" stroke-width="1.6"/>
<circle cx="580.5" cy="155.4" r="1.1" fill="#e0e0d8" />
<path d="M583.6 162.5 L587.6 156" stroke="#403a34" stroke-width="1.6"/>
<circle cx="588.3" cy="155.4" r="1.1" fill="#e0e0d8" />
<path d="M591.4 162.5 L595.4 156" stroke="#403a34" stroke-width="1.6"/>
<circle cx="596.1" cy="155.4" r="1.1" fill="#e0e0d8" />
<path d="M599.2 162.5 L603.2 156" stroke="#403a34" stroke-width="1.6"/>
<circle cx="603.9" cy="155.4" r="1.1" fill="#e0e0d8" />
<path d="M447 154 V164.4 H605" fill="none" stroke="#d8dcd0" stroke-width="1"/>
<text x="443.5" y="160.2" font-size="4" fill="#e4ecdc" text-anchor="middle" font-weight="normal" font-family='"Liberation Sans", sans-serif' transform="rotate(-90 443.5 160.2)" >KEY</text>
<rect x="516.4" y="114.1" width="79.4" height="34.8" fill="none" stroke="#b8d0b0" stroke-width="1.2" />
<text x="554" y="135.8" font-size="7" fill="#e4ecdc" text-anchor="middle" font-weight="bold" font-family='"Liberation Sans", sans-serif' textLength="67" lengthAdjust="spacingAndGlyphs" >UP9600/ESP Thing?</text>
<path d="M657.5 112.3 V171.4 H714" fill="none" stroke="#e4ecdc" stroke-width="1.1"/>
<circle cx="673" cy="120.2" r="4.6" fill="#e2e266" />
<circle cx="673" cy="120.2" r="2.1" fill="#1c2a1c" />
<circle cx="702.2" cy="120.5" r="4.6" fill="#e2e266" />
<circle cx="702.2" cy="120.5" r="2.1" fill="#1c2a1c" />
<circle cx="665.6" cy="149.8" r="4.6" fill="#e2e266" />
<circle cx="665.6" cy="149.8" r="2.1" fill="#1c2a1c" />
<circle cx="673" cy="156.7" r="4.6" fill="#e2e266" />
<circle cx="673" cy="156.7" r="2.1" fill="#1c2a1c" />
<circle cx="687.8" cy="149.8" r="4.6" fill="#e2e266" />
<circle cx="687.8" cy="149.8" r="2.1" fill="#1c2a1c" />
<circle cx="687.8" cy="164.2" r="4.6" fill="#e2e266" />
<circle cx="687.8" cy="164.2" r="2.1" fill="#1c2a1c" />
<circle cx="702.2" cy="156.7" r="4.6" fill="#e2e266" />
<circle cx="702.2" cy="156.7" r="2.1" fill="#1c2a1c" />
<circle cx="709.4" cy="149.8" r="4.6" fill="#e2e266" />
<circle cx="709.4" cy="149.8" r="2.1" fill="#1c2a1c" />
<text x="666" y="145" font-size="8.5" fill="#f0f0ee" text-anchor="middle" font-weight="bold" font-family='"Liberation Sans", sans-serif' >1</text>
<text x="688" y="145" font-size="8.5" fill="#f0f0ee" text-anchor="middle" font-weight="bold" font-family='"Liberation Sans", sans-serif' >3</text>
<text x="709.8" y="145" font-size="8.5" fill="#f0f0ee" text-anchor="middle" font-weight="bold" font-family='"Liberation Sans", sans-serif' >5</text>
<text x="701.2" y="152.2" font-size="8.5" fill="#f0f0ee" text-anchor="middle" font-weight="bold" font-family='"Liberation Sans", sans-serif' >4</text>
<text x="685.3" y="159.6" font-size="8.5" fill="#f0f0ee" text-anchor="middle" font-weight="bold" font-family='"Liberation Sans", sans-serif' >6</text>
<text x="671.9" y="167.8" font-size="8.5" fill="#f0f0ee" text-anchor="middle" font-weight="bold" font-family='"Liberation Sans", sans-serif' >2</text>
<text x="702.6" y="178.8" font-size="7" fill="#e4ecdc" text-anchor="start" font-weight="normal" font-family='"Liberation Sans", sans-serif' >CN4</text>
<text x="702.6" y="184.5" font-size="4.4" fill="#e4ecdc" text-anchor="start" font-weight="normal" font-family='"Liberation Mono", monospace' >MOS6</text>
<rect x="490.5" y="176.5" width="2" height="15.8" fill="#161616" />
<rect x="492.5" y="176.5" width="7" height="15.8" fill="#6a6460" />
<circle cx="503" cy="178.5" r="1.1" fill="#e0e0d8" />
<circle cx="503" cy="186" r="1.1" fill="#e0e0d8" />
<text x="486.2" y="189.4" font-size="4.6" fill="#e4ecdc" text-anchor="middle" font-weight="bold" font-family='"Liberation Sans", sans-serif' textLength="27" lengthAdjust="spacingAndGlyphs" transform="rotate(-90 486.2 189.4)" >PHI2_Bypass</text>
<rect x="481.5" y="230.1" width="15.8" height="7.5" fill="none" stroke="#d8d8b0" stroke-width="0.9" />
<path d="M486.27 230.23 A2.3 2.3 0 1 0 486.27 233.77" fill="none" stroke="#e8e8c0" stroke-width="1.5"/>
<ellipse cx="491.5" cy="233.6" rx="5.5" ry="3" fill="#b9683a" stroke="#8a5a2a" stroke-width="0.6"/>
<text x="488.7" y="228.3" font-size="4.6" fill="#e4ecdc" text-anchor="middle" font-weight="bold" font-family='"Liberation Mono", monospace' >DC7</text>
<rect x="596.7" y="350.3" width="16" height="8.2" fill="none" stroke="#d8d8b0" stroke-width="0.9" />
<path d="M601.77 352.13 A2.3 2.3 0 1 0 601.77 355.67" fill="none" stroke="#e8e8c0" stroke-width="1.5"/>
<ellipse cx="609.6" cy="355.5" rx="6.5" ry="3.6" fill="#b9683a" stroke="#8a5a2a" stroke-width="0.6"/>
<text x="604.4" y="348.7" font-size="4.6" fill="#e4ecdc" text-anchor="middle" font-weight="bold" font-family='"Liberation Mono", monospace' >DC2</text>
<rect x="687.3" y="350.1" width="15.6" height="8.7" fill="none" stroke="#d8d8b0" stroke-width="0.9" />
<path d="M692.27 352.63 A2.3 2.3 0 1 0 692.27 356.17" fill="none" stroke="#e8e8c0" stroke-width="1.5"/>
<ellipse cx="702" cy="356" rx="7" ry="4" fill="#b9683a" stroke="#8a5a2a" stroke-width="0.6"/>
<text x="695" y="348.5" font-size="4.6" fill="#e4ecdc" text-anchor="middle" font-weight="bold" font-family='"Liberation Mono", monospace' >DC10</text>
<path d="M566 353 V356 A2.5 2.5 0 0 0 566 361 V363 A2.5 2.5 0 0 0 566 368 V371" fill="none" stroke="#b8c8a8" stroke-width="0.9"/>
<rect x="567.4" y="352" width="4.1" height="20.5" fill="#121212" />
<rect x="571.5" y="354.2" width="24.4" height="17.6" fill="#625e5c" />
<rect x="569.8" y="351.6" width="24.6" height="2.2" fill="#f0f0e8" />
<rect x="569.8" y="371.9" width="24.6" height="2.2" fill="#f0f0e8" />
<rect x="574" y="351.4" width="1.6" height="2.6" fill="#1a1a1a" />
<rect x="574" y="371.7" width="1.6" height="2.6" fill="#1a1a1a" />
<rect x="581" y="351.4" width="1.6" height="2.6" fill="#1a1a1a" />
<rect x="581" y="371.7" width="1.6" height="2.6" fill="#1a1a1a" />
<rect x="588" y="351.4" width="1.6" height="2.6" fill="#1a1a1a" />
<rect x="588" y="371.7" width="1.6" height="2.6" fill="#1a1a1a" />
<path d="M565 351.6 A2.1 2.1 0 1 1 569.2 351.6" fill="none" stroke="#d8dc98" stroke-width="1.3"/>
<path d="M573.1 351.6 A2.1 2.1 0 1 1 577.3 351.6" fill="none" stroke="#d8dc98" stroke-width="1.3"/>
<path d="M580.6 351.6 A2.1 2.1 0 1 1 584.8 351.6" fill="none" stroke="#d8dc98" stroke-width="1.3"/>
<path d="M587.7 351.6 A2.1 2.1 0 1 1 591.9 351.6" fill="none" stroke="#d8dc98" stroke-width="1.3"/>
<path d="M564.6 371 A2.1 2.1 0 1 0 568.6 373.5" fill="none" stroke="#d8dc98" stroke-width="1.3"/>
<text x="579.2" y="381" font-size="4.8" fill="#e4ecdc" text-anchor="middle" font-weight="bold" font-family='"Liberation Mono", monospace' >ATtiny85</text>
<text x="114.3" y="376.8" font-size="4.6" fill="#e4ecdc" text-anchor="middle" font-weight="bold" font-family='"Liberation Mono", monospace' >DC17</text>
<rect x="106.2" y="379" width="16.2" height="8.7" fill="none" stroke="#d8d8b0" stroke-width="0.9" />
<path d="M117.9 385.5 A2.6 2.6 0 1 1 120.9 385.5" fill="none" stroke="#e6e690" stroke-width="1.1"/>
<ellipse cx="114.3" cy="385.5" rx="6.6" ry="4.2" fill="#b9683a"/>
<rect x="102.4" y="394.5" width="16.5" height="55.8" fill="#525454" />
<rect x="118.9" y="394.5" width="1.7" height="55.8" fill="#0e0e0e" />
<path d="M100.4 395.5 V392 H107.4 M114.9 392 H123.1 V395.5" fill="none" stroke="#eeeee6" stroke-width="1.2"/>
<rect x="120.6" y="395.1" width="2.6" height="4.4" fill="#f2f2ee" />
<rect x="100.2" y="395.1" width="1.9" height="4.4" fill="#f2f2ee" />
<path d="M124.4 394.9 A2.5 2.5 0 1 1 124.4 399.7" fill="none" stroke="#d4d68a" stroke-width="1.1"/>
<rect x="120.6" y="402.36" width="2.6" height="4.4" fill="#f2f2ee" />
<rect x="100.2" y="402.36" width="1.9" height="4.4" fill="#f2f2ee" />
<path d="M124.4 402.16 A2.5 2.5 0 1 1 124.4 406.96" fill="none" stroke="#d4d68a" stroke-width="1.1"/>
<rect x="120.6" y="409.62" width="2.6" height="4.4" fill="#f2f2ee" />
<rect x="100.2" y="409.62" width="1.9" height="4.4" fill="#f2f2ee" />
<path d="M124.4 409.42 A2.5 2.5 0 1 1 124.4 414.22" fill="none" stroke="#d4d68a" stroke-width="1.1"/>
<rect x="120.6" y="416.88" width="2.6" height="4.4" fill="#f2f2ee" />
<rect x="100.2" y="416.88" width="1.9" height="4.4" fill="#f2f2ee" />
<path d="M124.4 416.68 A2.5 2.5 0 1 1 124.4 421.48" fill="none" stroke="#d4d68a" stroke-width="1.1"/>
<rect x="120.6" y="424.14" width="2.6" height="4.4" fill="#f2f2ee" />
<rect x="100.2" y="424.14" width="1.9" height="4.4" fill="#f2f2ee" />
<path d="M124.4 423.94 A2.5 2.5 0 1 1 124.4 428.74" fill="none" stroke="#d4d68a" stroke-width="1.1"/>
<rect x="120.6" y="431.4" width="2.6" height="4.4" fill="#f2f2ee" />
<rect x="100.2" y="431.4" width="1.9" height="4.4" fill="#f2f2ee" />
<path d="M124.4 431.2 A2.5 2.5 0 1 1 124.4 436" fill="none" stroke="#d4d68a" stroke-width="1.1"/>
<rect x="120.6" y="438.66" width="2.6" height="4.4" fill="#f2f2ee" />
<rect x="100.2" y="438.66" width="1.9" height="4.4" fill="#f2f2ee" />
<path d="M124.4 438.46 A2.5 2.5 0 1 1 124.4 443.26" fill="none" stroke="#d4d68a" stroke-width="1.1"/>
<rect x="120.6" y="445.92" width="2.6" height="4.4" fill="#f2f2ee" />
<rect x="100.2" y="445.92" width="1.9" height="4.4" fill="#f2f2ee" />
<path d="M124.4 445.72 A2.5 2.5 0 1 1 124.4 450.52" fill="none" stroke="#d4d68a" stroke-width="1.1"/>
<text x="114.2" y="459" font-size="4.6" fill="#e4ecdc" text-anchor="middle" font-weight="bold" font-family='"Liberation Mono", monospace' >U13</text>
<text x="161.6" y="376.8" font-size="4.6" fill="#e4ecdc" text-anchor="middle" font-weight="bold" font-family='"Liberation Mono", monospace' >DC13</text>
<rect x="154" y="379" width="15.2" height="8.7" fill="none" stroke="#d8d8b0" stroke-width="0.9" />
<path d="M164.7 385.5 A2.6 2.6 0 1 1 167.7 385.5" fill="none" stroke="#e6e690" stroke-width="1.1"/>
<ellipse cx="161.6" cy="385" rx="6.6" ry="4.2" fill="#b9683a"/>
<rect x="149.7" y="394.5" width="17.3" height="55.8" fill="#525454" />
<rect x="167" y="394.5" width="1.7" height="55.8" fill="#0e0e0e" />
<path d="M147.7 395.5 V392 H154.7 M163 392 H171.2 V395.5" fill="none" stroke="#eeeee6" stroke-width="1.2"/>
<rect x="168.7" y="395.1" width="2.6" height="4.4" fill="#f2f2ee" />
<rect x="147.5" y="395.1" width="1.9" height="4.4" fill="#f2f2ee" />
<path d="M172.5 394.9 A2.5 2.5 0 1 1 172.5 399.7" fill="none" stroke="#d4d68a" stroke-width="1.1"/>
<rect x="168.7" y="402.36" width="2.6" height="4.4" fill="#f2f2ee" />
<rect x="147.5" y="402.36" width="1.9" height="4.4" fill="#f2f2ee" />
<path d="M172.5 402.16 A2.5 2.5 0 1 1 172.5 406.96" fill="none" stroke="#d4d68a" stroke-width="1.1"/>
<rect x="168.7" y="409.62" width="2.6" height="4.4" fill="#f2f2ee" />
<rect x="147.5" y="409.62" width="1.9" height="4.4" fill="#f2f2ee" />
<path d="M172.5 409.42 A2.5 2.5 0 1 1 172.5 414.22" fill="none" stroke="#d4d68a" stroke-width="1.1"/>
<rect x="168.7" y="416.88" width="2.6" height="4.4" fill="#f2f2ee" />
<rect x="147.5" y="416.88" width="1.9" height="4.4" fill="#f2f2ee" />
<path d="M172.5 416.68 A2.5 2.5 0 1 1 172.5 421.48" fill="none" stroke="#d4d68a" stroke-width="1.1"/>
<rect x="168.7" y="424.14" width="2.6" height="4.4" fill="#f2f2ee" />
<rect x="147.5" y="424.14" width="1.9" height="4.4" fill="#f2f2ee" />
<path d="M172.5 423.94 A2.5 2.5 0 1 1 172.5 428.74" fill="none" stroke="#d4d68a" stroke-width="1.1"/>
<rect x="168.7" y="431.4" width="2.6" height="4.4" fill="#f2f2ee" />
<rect x="147.5" y="431.4" width="1.9" height="4.4" fill="#f2f2ee" />
<path d="M172.5 431.2 A2.5 2.5 0 1 1 172.5 436" fill="none" stroke="#d4d68a" stroke-width="1.1"/>
<rect x="168.7" y="438.66" width="2.6" height="4.4" fill="#f2f2ee" />
<rect x="147.5" y="438.66" width="1.9" height="4.4" fill="#f2f2ee" />
<path d="M172.5 438.46 A2.5 2.5 0 1 1 172.5 443.26" fill="none" stroke="#d4d68a" stroke-width="1.1"/>
<rect x="168.7" y="445.92" width="2.6" height="4.4" fill="#f2f2ee" />
<rect x="147.5" y="445.92" width="1.9" height="4.4" fill="#f2f2ee" />
<path d="M172.5 445.72 A2.5 2.5 0 1 1 172.5 450.52" fill="none" stroke="#d4d68a" stroke-width="1.1"/>
<text x="161.6" y="459.5" font-size="4.6" fill="#e4ecdc" text-anchor="middle" font-weight="bold" font-family='"Liberation Mono", monospace' >U55</text>
<text x="206.4" y="376.8" font-size="4.6" fill="#e4ecdc" text-anchor="middle" font-weight="bold" font-family='"Liberation Mono", monospace' >DC131</text>
<rect x="198.3" y="379" width="16.2" height="8.7" fill="none" stroke="#d8d8b0" stroke-width="0.9" />
<path d="M210 385.5 A2.6 2.6 0 1 1 213 385.5" fill="none" stroke="#e6e690" stroke-width="1.1"/>
<ellipse cx="206.4" cy="385" rx="6.6" ry="4.2" fill="#b9683a"/>
<rect x="195" y="394.5" width="17.4" height="55.8" fill="#525454" />
<rect x="212.4" y="394.5" width="1.7" height="55.8" fill="#0e0e0e" />
<path d="M193 395.5 V392 H200 M208.4 392 H216.6 V395.5" fill="none" stroke="#eeeee6" stroke-width="1.2"/>
<rect x="214.1" y="395.1" width="2.6" height="4.4" fill="#f2f2ee" />
<rect x="192.8" y="395.1" width="1.9" height="4.4" fill="#f2f2ee" />
<path d="M217.9 394.9 A2.5 2.5 0 1 1 217.9 399.7" fill="none" stroke="#d4d68a" stroke-width="1.1"/>
<rect x="214.1" y="402.36" width="2.6" height="4.4" fill="#f2f2ee" />
<rect x="192.8" y="402.36" width="1.9" height="4.4" fill="#f2f2ee" />
<path d="M217.9 402.16 A2.5 2.5 0 1 1 217.9 406.96" fill="none" stroke="#d4d68a" stroke-width="1.1"/>
<rect x="214.1" y="409.62" width="2.6" height="4.4" fill="#f2f2ee" />
<rect x="192.8" y="409.62" width="1.9" height="4.4" fill="#f2f2ee" />
<path d="M217.9 409.42 A2.5 2.5 0 1 1 217.9 414.22" fill="none" stroke="#d4d68a" stroke-width="1.1"/>
<rect x="214.1" y="416.88" width="2.6" height="4.4" fill="#f2f2ee" />
<rect x="192.8" y="416.88" width="1.9" height="4.4" fill="#f2f2ee" />
<path d="M217.9 416.68 A2.5 2.5 0 1 1 217.9 421.48" fill="none" stroke="#d4d68a" stroke-width="1.1"/>
<rect x="214.1" y="424.14" width="2.6" height="4.4" fill="#f2f2ee" />
<rect x="192.8" y="424.14" width="1.9" height="4.4" fill="#f2f2ee" />
<path d="M217.9 423.94 A2.5 2.5 0 1 1 217.9 428.74" fill="none" stroke="#d4d68a" stroke-width="1.1"/>
<rect x="214.1" y="431.4" width="2.6" height="4.4" fill="#f2f2ee" />
<rect x="192.8" y="431.4" width="1.9" height="4.4" fill="#f2f2ee" />
<path d="M217.9 431.2 A2.5 2.5 0 1 1 217.9 436" fill="none" stroke="#d4d68a" stroke-width="1.1"/>
<rect x="214.1" y="438.66" width="2.6" height="4.4" fill="#f2f2ee" />
<rect x="192.8" y="438.66" width="1.9" height="4.4" fill="#f2f2ee" />
<path d="M217.9 438.46 A2.5 2.5 0 1 1 217.9 443.26" fill="none" stroke="#d4d68a" stroke-width="1.1"/>
<rect x="214.1" y="445.92" width="2.6" height="4.4" fill="#f2f2ee" />
<rect x="192.8" y="445.92" width="1.9" height="4.4" fill="#f2f2ee" />
<path d="M217.9 445.72 A2.5 2.5 0 1 1 217.9 450.52" fill="none" stroke="#d4d68a" stroke-width="1.1"/>
<text x="205.9" y="459.5" font-size="4.6" fill="#e4ecdc" text-anchor="middle" font-weight="bold" font-family='"Liberation Mono", monospace' >U151</text>
<text x="250.45" y="376.3" font-size="4.6" fill="#e4ecdc" text-anchor="middle" font-weight="bold" font-family='"Liberation Mono", monospace' >DC5</text>
<rect x="243.2" y="379" width="14.5" height="8.7" fill="none" stroke="#d8d8b0" stroke-width="0.9" />
<path d="M253.2 385.5 A2.6 2.6 0 1 1 256.2 385.5" fill="none" stroke="#e6e690" stroke-width="1.1"/>
<ellipse cx="250.45" cy="385" rx="6.6" ry="4.2" fill="#b9683a"/>
<rect x="241" y="392.3" width="17.6" height="55.7" fill="#64605c" />
<rect x="241" y="391.3" width="17.6" height="1.5" fill="#0e0e0e" />
<rect x="236.9" y="393.8" width="2.6" height="4" fill="#f2f2ee" />
<path d="M238.2 393.4 A2.5 2.5 0 1 0 238.2 398.2" fill="none" stroke="#d4d68a" stroke-width="1.1" transform="translate(0.3 0)"/>
<rect x="260.1" y="393.8" width="2.6" height="4" fill="#f2f2ee" />
<path d="M261.4 393.4 A2.5 2.5 0 1 0 261.4 398.2" fill="none" stroke="#d4d68a" stroke-width="1.1" transform="translate(-0.3 0)"/>
<rect x="236.9" y="400.11" width="2.6" height="4" fill="#f2f2ee" />
<path d="M238.2 399.71 A2.5 2.5 0 1 0 238.2 404.51" fill="none" stroke="#d4d68a" stroke-width="1.1" transform="translate(0.3 0)"/>
<rect x="260.1" y="400.11" width="2.6" height="4" fill="#f2f2ee" />
<path d="M261.4 399.71 A2.5 2.5 0 1 0 261.4 404.51" fill="none" stroke="#d4d68a" stroke-width="1.1" transform="translate(-0.3 0)"/>
<rect x="236.9" y="406.42" width="2.6" height="4" fill="#f2f2ee" />
<path d="M238.2 406.02 A2.5 2.5 0 1 0 238.2 410.82" fill="none" stroke="#d4d68a" stroke-width="1.1" transform="translate(0.3 0)"/>
<rect x="260.1" y="406.42" width="2.6" height="4" fill="#f2f2ee" />
<path d="M261.4 406.02 A2.5 2.5 0 1 0 261.4 410.82" fill="none" stroke="#d4d68a" stroke-width="1.1" transform="translate(-0.3 0)"/>
<rect x="236.9" y="412.73" width="2.6" height="4" fill="#f2f2ee" />
<path d="M238.2 412.33 A2.5 2.5 0 1 0 238.2 417.13" fill="none" stroke="#d4d68a" stroke-width="1.1" transform="translate(0.3 0)"/>
<rect x="260.1" y="412.73" width="2.6" height="4" fill="#f2f2ee" />
<path d="M261.4 412.33 A2.5 2.5 0 1 0 261.4 417.13" fill="none" stroke="#d4d68a" stroke-width="1.1" transform="translate(-0.3 0)"/>
<rect x="236.9" y="419.04" width="2.6" height="4" fill="#f2f2ee" />
<path d="M238.2 418.64 A2.5 2.5 0 1 0 238.2 423.44" fill="none" stroke="#d4d68a" stroke-width="1.1" transform="translate(0.3 0)"/>
<rect x="260.1" y="419.04" width="2.6" height="4" fill="#f2f2ee" />
<path d="M261.4 418.64 A2.5 2.5 0 1 0 261.4 423.44" fill="none" stroke="#d4d68a" stroke-width="1.1" transform="translate(-0.3 0)"/>
<rect x="236.9" y="425.35" width="2.6" height="4" fill="#f2f2ee" />
<path d="M238.2 424.95 A2.5 2.5 0 1 0 238.2 429.75" fill="none" stroke="#d4d68a" stroke-width="1.1" transform="translate(0.3 0)"/>
<rect x="260.1" y="425.35" width="2.6" height="4" fill="#f2f2ee" />
<path d="M261.4 424.95 A2.5 2.5 0 1 0 261.4 429.75" fill="none" stroke="#d4d68a" stroke-width="1.1" transform="translate(-0.3 0)"/>
<rect x="236.9" y="431.66" width="2.6" height="4" fill="#f2f2ee" />
<path d="M238.2 431.26 A2.5 2.5 0 1 0 238.2 436.06" fill="none" stroke="#d4d68a" stroke-width="1.1" transform="translate(0.3 0)"/>
<rect x="260.1" y="431.66" width="2.6" height="4" fill="#f2f2ee" />
<path d="M261.4 431.26 A2.5 2.5 0 1 0 261.4 436.06" fill="none" stroke="#d4d68a" stroke-width="1.1" transform="translate(-0.3 0)"/>
<rect x="236.9" y="437.97" width="2.6" height="4" fill="#f2f2ee" />
<path d="M238.2 437.57 A2.5 2.5 0 1 0 238.2 442.37" fill="none" stroke="#d4d68a" stroke-width="1.1" transform="translate(0.3 0)"/>
<rect x="260.1" y="437.97" width="2.6" height="4" fill="#f2f2ee" />
<path d="M261.4 437.57 A2.5 2.5 0 1 0 261.4 442.37" fill="none" stroke="#d4d68a" stroke-width="1.1" transform="translate(-0.3 0)"/>
<text x="251.2" y="466" font-size="4.6" fill="#e4ecdc" text-anchor="middle" font-weight="bold" font-family='"Liberation Mono", monospace' >U27</text>
<text x="304.2" y="375.3" font-size="4.6" fill="#e4ecdc" text-anchor="middle" font-weight="bold" font-family='"Liberation Mono", monospace' >DC3</text>
<rect x="296.3" y="376.9" width="15.8" height="9.7" fill="none" stroke="#d8d8b0" stroke-width="0.9" />
<path d="M307.6 383.4 A2.6 2.6 0 1 1 310.6 383.4" fill="none" stroke="#e6e690" stroke-width="1.1"/>
<ellipse cx="304.2" cy="382.9" rx="6.6" ry="4.2" fill="#b9683a"/>
<rect x="296.3" y="392" width="16.9" height="68" fill="#525250" />
<rect x="296.3" y="391" width="16.9" height="1.5" fill="#0e0e0e" />
<rect x="292.2" y="392.8" width="2.6" height="4" fill="#f2f2ee" />
<path d="M293.5 392.4 A2.5 2.5 0 1 0 293.5 397.2" fill="none" stroke="#d4d68a" stroke-width="1.1" transform="translate(0.3 0)"/>
<rect x="314.7" y="392.8" width="2.6" height="4" fill="#f2f2ee" />
<path d="M316 392.4 A2.5 2.5 0 1 0 316 397.2" fill="none" stroke="#d4d68a" stroke-width="1.1" transform="translate(-0.3 0)"/>
<rect x="292.2" y="400.27" width="2.6" height="4" fill="#f2f2ee" />
<path d="M293.5 399.87 A2.5 2.5 0 1 0 293.5 404.67" fill="none" stroke="#d4d68a" stroke-width="1.1" transform="translate(0.3 0)"/>
<rect x="314.7" y="400.27" width="2.6" height="4" fill="#f2f2ee" />
<path d="M316 399.87 A2.5 2.5 0 1 0 316 404.67" fill="none" stroke="#d4d68a" stroke-width="1.1" transform="translate(-0.3 0)"/>
<rect x="292.2" y="407.74" width="2.6" height="4" fill="#f2f2ee" />
<path d="M293.5 407.34 A2.5 2.5 0 1 0 293.5 412.14" fill="none" stroke="#d4d68a" stroke-width="1.1" transform="translate(0.3 0)"/>
<rect x="314.7" y="407.74" width="2.6" height="4" fill="#f2f2ee" />
<path d="M316 407.34 A2.5 2.5 0 1 0 316 412.14" fill="none" stroke="#d4d68a" stroke-width="1.1" transform="translate(-0.3 0)"/>
<rect x="292.2" y="415.21" width="2.6" height="4" fill="#f2f2ee" />
<path d="M293.5 414.81 A2.5 2.5 0 1 0 293.5 419.61" fill="none" stroke="#d4d68a" stroke-width="1.1" transform="translate(0.3 0)"/>
<rect x="314.7" y="415.21" width="2.6" height="4" fill="#f2f2ee" />
<path d="M316 414.81 A2.5 2.5 0 1 0 316 419.61" fill="none" stroke="#d4d68a" stroke-width="1.1" transform="translate(-0.3 0)"/>
<rect x="292.2" y="422.68" width="2.6" height="4" fill="#f2f2ee" />
<path d="M293.5 422.28 A2.5 2.5 0 1 0 293.5 427.08" fill="none" stroke="#d4d68a" stroke-width="1.1" transform="translate(0.3 0)"/>
<rect x="314.7" y="422.68" width="2.6" height="4" fill="#f2f2ee" />
<path d="M316 422.28 A2.5 2.5 0 1 0 316 427.08" fill="none" stroke="#d4d68a" stroke-width="1.1" transform="translate(-0.3 0)"/>
<rect x="292.2" y="430.15" width="2.6" height="4" fill="#f2f2ee" />
<path d="M293.5 429.75 A2.5 2.5 0 1 0 293.5 434.55" fill="none" stroke="#d4d68a" stroke-width="1.1" transform="translate(0.3 0)"/>
<rect x="314.7" y="430.15" width="2.6" height="4" fill="#f2f2ee" />
<path d="M316 429.75 A2.5 2.5 0 1 0 316 434.55" fill="none" stroke="#d4d68a" stroke-width="1.1" transform="translate(-0.3 0)"/>
<rect x="292.2" y="437.62" width="2.6" height="4" fill="#f2f2ee" />
<path d="M293.5 437.22 A2.5 2.5 0 1 0 293.5 442.02" fill="none" stroke="#d4d68a" stroke-width="1.1" transform="translate(0.3 0)"/>
<rect x="314.7" y="437.62" width="2.6" height="4" fill="#f2f2ee" />
<path d="M316 437.22 A2.5 2.5 0 1 0 316 442.02" fill="none" stroke="#d4d68a" stroke-width="1.1" transform="translate(-0.3 0)"/>
<rect x="292.2" y="445.09" width="2.6" height="4" fill="#f2f2ee" />
<path d="M293.5 444.69 A2.5 2.5 0 1 0 293.5 449.49" fill="none" stroke="#d4d68a" stroke-width="1.1" transform="translate(0.3 0)"/>
<rect x="314.7" y="445.09" width="2.6" height="4" fill="#f2f2ee" />
<path d="M316 444.69 A2.5 2.5 0 1 0 316 449.49" fill="none" stroke="#d4d68a" stroke-width="1.1" transform="translate(-0.3 0)"/>
<rect x="292.2" y="452.56" width="2.6" height="4" fill="#f2f2ee" />
<path d="M293.5 452.16 A2.5 2.5 0 1 0 293.5 456.96" fill="none" stroke="#d4d68a" stroke-width="1.1" transform="translate(0.3 0)"/>
<rect x="314.7" y="452.56" width="2.6" height="4" fill="#f2f2ee" />
<path d="M316 452.16 A2.5 2.5 0 1 0 316 456.96" fill="none" stroke="#d4d68a" stroke-width="1.1" transform="translate(-0.3 0)"/>
<text x="304.6" y="465.5" font-size="4.6" fill="#e4ecdc" text-anchor="middle" font-weight="bold" font-family='"Liberation Mono", monospace' >U6</text>
<text x="363.4" y="375.3" font-size="4.6" fill="#e4ecdc" text-anchor="middle" font-weight="bold" font-family='"Liberation Mono", monospace' >DC22</text>
<rect x="355.3" y="376.9" width="16.2" height="9.7" fill="none" stroke="#d8d8b0" stroke-width="0.9" />
<path d="M367 383.4 A2.6 2.6 0 1 1 370 383.4" fill="none" stroke="#e6e690" stroke-width="1.1"/>
<ellipse cx="363.4" cy="382.9" rx="6.6" ry="4.2" fill="#b9683a"/>
<rect x="356.4" y="392" width="16.8" height="55.5" fill="#625e5a" />
<rect x="356.4" y="391" width="16.8" height="1.5" fill="#0e0e0e" />
<rect x="352.3" y="393.2" width="2.6" height="4" fill="#f2f2ee" />
<path d="M353.6 392.8 A2.5 2.5 0 1 0 353.6 397.6" fill="none" stroke="#d4d68a" stroke-width="1.1" transform="translate(0.3 0)"/>
<rect x="374.7" y="393.2" width="2.6" height="4" fill="#f2f2ee" />
<path d="M376 392.8 A2.5 2.5 0 1 0 376 397.6" fill="none" stroke="#d4d68a" stroke-width="1.1" transform="translate(-0.3 0)"/>
<rect x="352.3" y="400.58" width="2.6" height="4" fill="#f2f2ee" />
<path d="M353.6 400.18 A2.5 2.5 0 1 0 353.6 404.98" fill="none" stroke="#d4d68a" stroke-width="1.1" transform="translate(0.3 0)"/>
<rect x="374.7" y="400.58" width="2.6" height="4" fill="#f2f2ee" />
<path d="M376 400.18 A2.5 2.5 0 1 0 376 404.98" fill="none" stroke="#d4d68a" stroke-width="1.1" transform="translate(-0.3 0)"/>
<rect x="352.3" y="407.96" width="2.6" height="4" fill="#f2f2ee" />
<path d="M353.6 407.56 A2.5 2.5 0 1 0 353.6 412.36" fill="none" stroke="#d4d68a" stroke-width="1.1" transform="translate(0.3 0)"/>
<rect x="374.7" y="407.96" width="2.6" height="4" fill="#f2f2ee" />
<path d="M376 407.56 A2.5 2.5 0 1 0 376 412.36" fill="none" stroke="#d4d68a" stroke-width="1.1" transform="translate(-0.3 0)"/>
<rect x="352.3" y="415.34" width="2.6" height="4" fill="#f2f2ee" />
<path d="M353.6 414.94 A2.5 2.5 0 1 0 353.6 419.74" fill="none" stroke="#d4d68a" stroke-width="1.1" transform="translate(0.3 0)"/>
<rect x="374.7" y="415.34" width="2.6" height="4" fill="#f2f2ee" />
<path d="M376 414.94 A2.5 2.5 0 1 0 376 419.74" fill="none" stroke="#d4d68a" stroke-width="1.1" transform="translate(-0.3 0)"/>
<rect x="352.3" y="422.72" width="2.6" height="4" fill="#f2f2ee" />
<path d="M353.6 422.32 A2.5 2.5 0 1 0 353.6 427.12" fill="none" stroke="#d4d68a" stroke-width="1.1" transform="translate(0.3 0)"/>
<rect x="374.7" y="422.72" width="2.6" height="4" fill="#f2f2ee" />
<path d="M376 422.32 A2.5 2.5 0 1 0 376 427.12" fill="none" stroke="#d4d68a" stroke-width="1.1" transform="translate(-0.3 0)"/>
<rect x="352.3" y="430.1" width="2.6" height="4" fill="#f2f2ee" />
<path d="M353.6 429.7 A2.5 2.5 0 1 0 353.6 434.5" fill="none" stroke="#d4d68a" stroke-width="1.1" transform="translate(0.3 0)"/>
<rect x="374.7" y="430.1" width="2.6" height="4" fill="#f2f2ee" />
<path d="M376 429.7 A2.5 2.5 0 1 0 376 434.5" fill="none" stroke="#d4d68a" stroke-width="1.1" transform="translate(-0.3 0)"/>
<rect x="352.3" y="437.48" width="2.6" height="4" fill="#f2f2ee" />
<path d="M353.6 437.08 A2.5 2.5 0 1 0 353.6 441.88" fill="none" stroke="#d4d68a" stroke-width="1.1" transform="translate(0.3 0)"/>
<rect x="374.7" y="437.48" width="2.6" height="4" fill="#f2f2ee" />
<path d="M376 437.08 A2.5 2.5 0 1 0 376 441.88" fill="none" stroke="#d4d68a" stroke-width="1.1" transform="translate(-0.3 0)"/>
<text x="363.5" y="454.5" font-size="4.6" fill="#e4ecdc" text-anchor="middle" font-weight="bold" font-family='"Liberation Mono", monospace' >U8</text>
<rect x="239.8" y="448" width="20.1" height="7.7" fill="#7a7672" />
<path d="M242 449 V455" stroke="#5a5652" stroke-width="1"/>
<path d="M247 449 V455" stroke="#5a5652" stroke-width="1"/>
<path d="M252 449 V455" stroke="#5a5652" stroke-width="1"/>
<path d="M257 449 V455" stroke="#5a5652" stroke-width="1"/>
<rect x="261.5" y="443" width="1.5" height="9" fill="none" stroke="#d8dcd0" stroke-width="0.6" />
<text x="232.9" y="452" font-size="4.2" fill="#e4ecdc" text-anchor="middle" font-weight="bold" font-family='"Liberation Mono", monospace' >ENA</text>
<text x="267.4" y="452" font-size="4.2" fill="#e4ecdc" text-anchor="middle" font-weight="bold" font-family='"Liberation Mono", monospace' >DIS</text>
<text x="249.5" y="459.3" font-size="4" fill="#e4ecdc" text-anchor="middle" font-weight="bold" font-family='"Liberation Mono", monospace' >V₀₁₂₃₄₅</text>
<rect x="198" y="465.5" width="16" height="8" fill="#3c3a38" />
<rect x="197.5" y="465" width="17" height="9" fill="none" stroke="#dcdcd0" stroke-width="0.9" />
<text x="505.2" y="443.5" font-size="4.8" fill="#e4ecdc" text-anchor="middle" font-weight="bold" font-family='"Liberation Mono", monospace' >PLA</text>
<text x="505.2" y="453.5" font-size="4.6" fill="#e4ecdc" text-anchor="middle" font-weight="bold" font-family='"Liberation Mono", monospace' >DC20</text>
<rect x="497.3" y="455.4" width="15.2" height="7.3" fill="none" stroke="#d8d8b0" stroke-width="0.9" />
<ellipse cx="508.9" cy="462.5" rx="5.5" ry="4" fill="#b9683a"/>
<path d="M501 461 A2.3 2.3 0 1 1 505 459.3" fill="none" stroke="#e6e690" stroke-width="1.1"/>
<rect x="478" y="468.5" width="54" height="6" fill="#111" />
<path d="M475.1 474 V467.5 H500.5 M509.5 467.5 H535 V474" fill="none" stroke="#e4ecdc" stroke-width="1.1"/>
<rect x="478" y="469" width="3" height="3" fill="#e6e690" />
<circle cx="677.3" cy="439.8" r="9.9" fill="none" stroke="#e4e4cc" stroke-width="1.1"/>
<circle cx="677.3" cy="433.4" r="1.4" fill="#111" stroke="#d8d8c0" stroke-width="0.7"/>
<path d="M675.23 455.73 L697.12 467.36 L706.88 447.64 L684.37 437.27 Z" fill="#0a1a38"/>
<circle cx="679.8" cy="446.5" r="10.3" fill="#0a1a38" />
<circle cx="702" cy="457.5" r="11" fill="#0a1a38" />
<path d="M672 443 Q675 437 682 437" fill="none" stroke="#1e3462" stroke-width="2"/>
<circle cx="700.5" cy="456.6" r="9.5" fill="url(#c13)" />
<path d="M700.5 448 V465" stroke="#f0c8c8" stroke-width="0.6"/>
<text x="666.5" y="454" font-size="6.8" fill="#e4ecdc" text-anchor="middle" font-weight="normal" font-family='"Liberation Sans", sans-serif' transform="rotate(-90 666.5 454)" >C13</text>
<text x="658" y="469.5" font-size="6.8" fill="#e4ecdc" text-anchor="middle" font-weight="normal" font-family='"Liberation Sans", sans-serif' >C10</text>
<path d="M646 473 V472.2 H669 V473 M685 473 V472.2 H711 V473" fill="none" stroke="#e4ecdc" stroke-width="1.1"/>
</g>
<rect x="714" y="45" width="27" height="428" fill="#f0f0f0" />
<rect x="714" y="45" width="1" height="428" fill="#d6d6d6" />
<rect x="717" y="45.4" width="24" height="10.2" fill="#d7d7d7" />
<text x="718.6" y="53.2" font-size="7.2" fill="#202020" text-anchor="start" font-weight="normal" font-family='"Liberation Sans", sans-serif' >Appearance</text>
<rect x="721" y="61.1" width="7.3" height="6.6" fill="#3c3a2c" />
<circle cx="734.5" cy="64.4" r="3.0" fill="#a4a4a4" stroke="#3c3c3c" stroke-width="1.4"/>
<ellipse cx="734.5" cy="64.4" rx="2.2" ry="1.15" fill="#ececec"/>
<rect x="739.8" y="62" width="1.2" height="4.8" fill="#9c9c9c" />
<rect x="721" y="69.5" width="7.3" height="6.6" fill="#b7b325" />
<circle cx="734.5" cy="72.8" r="3.0" fill="#a4a4a4" stroke="#3c3c3c" stroke-width="1.4"/>
<ellipse cx="734.5" cy="72.8" rx="2.2" ry="1.15" fill="#ececec"/>
<rect x="739.8" y="70.4" width="1.2" height="4.8" fill="#9c9c9c" />
<rect x="721" y="78.1" width="7.3" height="6.6" fill="#b7b325" />
<circle cx="734.5" cy="81.4" r="3.0" fill="#a4a4a4" stroke="#3c3c3c" stroke-width="1.4"/>
<ellipse cx="734.5" cy="81.4" rx="2.2" ry="1.15" fill="#ececec"/>
<rect x="739.8" y="79" width="1.2" height="4.8" fill="#9c9c9c" />
<circle cx="734.5" cy="90.3" r="3.0" fill="#a4a4a4" stroke="#3c3c3c" stroke-width="1.4"/>
<ellipse cx="734.5" cy="90.3" rx="2.2" ry="1.15" fill="#ececec"/>
<rect x="739.8" y="87.9" width="1.2" height="4.8" fill="#9c9c9c" />
<rect x="721" y="96.7" width="7.3" height="6.6" fill="#8c8c8c" />
<circle cx="734.5" cy="100" r="3.0" fill="#a4a4a4" stroke="#3c3c3c" stroke-width="1.4"/>
<ellipse cx="734.5" cy="100" rx="2.2" ry="1.15" fill="#ececec"/>
<rect x="739.8" y="97.6" width="1.2" height="4.8" fill="#9c9c9c" />
<rect x="721" y="105.5" width="7.3" height="6.6" fill="#e6e6e6" />
<circle cx="734.5" cy="108.8" r="3.0" fill="#a4a4a4" stroke="#3c3c3c" stroke-width="1.4"/>
<ellipse cx="734.5" cy="108.8" rx="2.2" ry="1.15" fill="#ececec"/>
<rect x="739.8" y="106.4" width="1.2" height="4.8" fill="#9c9c9c" />
<rect x="721" y="114.2" width="7.3" height="6.6" fill="#e6e6e6" />
<circle cx="734.5" cy="117.5" r="3.0" fill="#a4a4a4" stroke="#3c3c3c" stroke-width="1.4"/>
<ellipse cx="734.5" cy="117.5" rx="2.2" ry="1.15" fill="#ececec"/>
<rect x="739.8" y="115.1" width="1.2" height="4.8" fill="#9c9c9c" />
<rect x="721" y="123.3" width="7.3" height="6.6" fill="#2f4f3a" />
<circle cx="734.5" cy="126.6" r="3.0" fill="#a4a4a4" stroke="#3c3c3c" stroke-width="1.4"/>
<ellipse cx="734.5" cy="126.6" rx="2.2" ry="1.15" fill="#ececec"/>
<rect x="739.8" y="124.2" width="1.2" height="4.8" fill="#9c9c9c" />
<rect x="721" y="132.2" width="7.3" height="6.6" fill="#2f4f3a" />
<circle cx="734.5" cy="135.5" r="3.0" fill="#a4a4a4" stroke="#3c3c3c" stroke-width="1.4"/>
<ellipse cx="734.5" cy="135.5" rx="2.2" ry="1.15" fill="#ececec"/>
<rect x="739.8" y="133.1" width="1.2" height="4.8" fill="#9c9c9c" />
<rect x="721" y="141.3" width="1.9" height="1.9" fill="#dcdcdc" />
<rect x="721" y="145.1" width="1.9" height="1.9" fill="#dcdcdc" />
<rect x="722.9" y="143.2" width="1.9" height="1.9" fill="#dcdcdc" />
<rect x="722.9" y="147" width="1.9" height="1.9" fill="#dcdcdc" />
<rect x="724.8" y="141.3" width="1.9" height="1.9" fill="#dcdcdc" />
<rect x="724.8" y="145.1" width="1.9" height="1.9" fill="#dcdcdc" />
<rect x="726.7" y="143.2" width="1.9" height="1.9" fill="#dcdcdc" />
<rect x="726.7" y="147" width="1.9" height="1.9" fill="#dcdcdc" />
<circle cx="734.5" cy="145" r="3.0" fill="#a4a4a4" stroke="#3c3c3c" stroke-width="1.4"/>
<ellipse cx="734.5" cy="145" rx="2.2" ry="1.15" fill="#ececec"/>
<rect x="739.8" y="142.6" width="1.2" height="4.8" fill="#9c9c9c" />
<rect x="721" y="150.1" width="1.9" height="1.9" fill="#dcdcdc" />
<rect x="721" y="153.9" width="1.9" height="1.9" fill="#dcdcdc" />
<rect x="722.9" y="152" width="1.9" height="1.9" fill="#dcdcdc" />
<rect x="722.9" y="155.8" width="1.9" height="1.9" fill="#dcdcdc" />
<rect x="724.8" y="150.1" width="1.9" height="1.9" fill="#dcdcdc" />
<rect x="724.8" y="153.9" width="1.9" height="1.9" fill="#dcdcdc" />
<rect x="726.7" y="152" width="1.9" height="1.9" fill="#dcdcdc" />
<rect x="726.7" y="155.8" width="1.9" height="1.9" fill="#dcdcdc" />
<circle cx="734.5" cy="153.8" r="3.0" fill="#a4a4a4" stroke="#3c3c3c" stroke-width="1.4"/>
<ellipse cx="734.5" cy="153.8" rx="2.2" ry="1.15" fill="#ececec"/>
<rect x="739.8" y="151.4" width="1.2" height="4.8" fill="#9c9c9c" />
<rect x="721" y="158.7" width="1.9" height="1.9" fill="#dcdcdc" />
<rect x="721" y="162.5" width="1.9" height="1.9" fill="#dcdcdc" />
<rect x="722.9" y="160.6" width="1.9" height="1.9" fill="#dcdcdc" />
<rect x="722.9" y="164.4" width="1.9" height="1.9" fill="#dcdcdc" />
<rect x="724.8" y="158.7" width="1.9" height="1.9" fill="#dcdcdc" />
<rect x="724.8" y="162.5" width="1.9" height="1.9" fill="#dcdcdc" />
<rect x="726.7" y="160.6" width="1.9" height="1.9" fill="#dcdcdc" />
<rect x="726.7" y="164.4" width="1.9" height="1.9" fill="#dcdcdc" />
<circle cx="734.5" cy="162.4" r="3.0" fill="#a4a4a4" stroke="#3c3c3c" stroke-width="1.4"/>
<ellipse cx="734.5" cy="162.4" rx="2.2" ry="1.15" fill="#ececec"/>
<rect x="739.8" y="160" width="1.2" height="4.8" fill="#9c9c9c" />
<rect x="721" y="167.8" width="1.9" height="1.9" fill="#dcdcdc" />
<rect x="721" y="171.6" width="1.9" height="1.9" fill="#dcdcdc" />
<rect x="722.9" y="169.7" width="1.9" height="1.9" fill="#dcdcdc" />
<rect x="722.9" y="173.5" width="1.9" height="1.9" fill="#dcdcdc" />
<rect x="724.8" y="167.8" width="1.9" height="1.9" fill="#dcdcdc" />
<rect x="724.8" y="171.6" width="1.9" height="1.9" fill="#dcdcdc" />
<rect x="726.7" y="169.7" width="1.9" height="1.9" fill="#dcdcdc" />
<rect x="726.7" y="173.5" width="1.9" height="1.9" fill="#dcdcdc" />
<circle cx="734.5" cy="171.5" r="3.0" fill="#a4a4a4" stroke="#3c3c3c" stroke-width="1.4"/>
<ellipse cx="734.5" cy="171.5" rx="2.2" ry="1.15" fill="#ececec"/>
<rect x="739.8" y="169.1" width="1.2" height="4.8" fill="#9c9c9c" />
<circle cx="734.5" cy="184.4" r="3.0" fill="#a4a4a4" stroke="#3c3c3c" stroke-width="1.4"/>
<ellipse cx="734.5" cy="184.4" rx="2.2" ry="1.15" fill="#ececec"/>
<rect x="739.8" y="182" width="1.2" height="4.8" fill="#9c9c9c" />
<circle cx="734.5" cy="194.5" r="3.0" fill="#a4a4a4" stroke="#3c3c3c" stroke-width="1.4"/>
<ellipse cx="734.5" cy="194.5" rx="2.2" ry="1.15" fill="#ececec"/>
<rect x="739.8" y="192.1" width="1.2" height="4.8" fill="#9c9c9c" />
<circle cx="734.5" cy="203" r="3.0" fill="#ececec" stroke="#a0a0a0" stroke-width="1.4"/>
<path d="M732.4 205 L736.6 201" stroke="#a0a0a0" stroke-width="1"/>
<rect x="739.8" y="200.6" width="1.2" height="4.8" fill="#9c9c9c" />
<circle cx="734.5" cy="212.6" r="3.0" fill="#a4a4a4" stroke="#3c3c3c" stroke-width="1.4"/>
<ellipse cx="734.5" cy="212.6" rx="2.2" ry="1.15" fill="#ececec"/>
<rect x="739.8" y="210.2" width="1.2" height="4.8" fill="#9c9c9c" />
<circle cx="734.5" cy="221.9" r="3.0" fill="#ececec" stroke="#a0a0a0" stroke-width="1.4"/>
<path d="M732.4 223.9 L736.6 219.9" stroke="#a0a0a0" stroke-width="1"/>
<rect x="739.8" y="219.5" width="1.2" height="4.8" fill="#9c9c9c" />
<circle cx="734.5" cy="230.5" r="3.0" fill="#ececec" stroke="#a0a0a0" stroke-width="1.4"/>
<path d="M732.4 232.5 L736.6 228.5" stroke="#a0a0a0" stroke-width="1"/>
<rect x="739.8" y="228.1" width="1.2" height="4.8" fill="#9c9c9c" />
<circle cx="734.5" cy="243.5" r="3.0" fill="#a4a4a4" stroke="#3c3c3c" stroke-width="1.4"/>
<ellipse cx="734.5" cy="243.5" rx="2.2" ry="1.15" fill="#ececec"/>
<rect x="739.8" y="241.1" width="1.2" height="4.8" fill="#9c9c9c" />
<circle cx="734.5" cy="252" r="3.0" fill="#a4a4a4" stroke="#3c3c3c" stroke-width="1.4"/>
<ellipse cx="734.5" cy="252" rx="2.2" ry="1.15" fill="#ececec"/>
<rect x="739.8" y="249.6" width="1.2" height="4.8" fill="#9c9c9c" />
<circle cx="734.5" cy="260.8" r="3.0" fill="#a4a4a4" stroke="#3c3c3c" stroke-width="1.4"/>
<ellipse cx="734.5" cy="260.8" rx="2.2" ry="1.15" fill="#ececec"/>
<rect x="739.8" y="258.4" width="1.2" height="4.8" fill="#9c9c9c" />
<circle cx="734.5" cy="270.3" r="3.0" fill="#ececec" stroke="#a0a0a0" stroke-width="1.4"/>
<path d="M732.4 272.3 L736.6 268.3" stroke="#a0a0a0" stroke-width="1"/>
<rect x="739.8" y="267.9" width="1.2" height="4.8" fill="#9c9c9c" />
<circle cx="734.5" cy="282.4" r="3.0" fill="#a4a4a4" stroke="#3c3c3c" stroke-width="1.4"/>
<ellipse cx="734.5" cy="282.4" rx="2.2" ry="1.15" fill="#ececec"/>
<rect x="739.8" y="280" width="1.2" height="4.8" fill="#9c9c9c" />
<rect x="721" y="289" width="7.3" height="6.6" fill="#d0d0e2" />
<rect x="721" y="298" width="7.3" height="6.6" fill="#5a5a70" />
<rect x="720.3" y="395.9" width="6.5" height="6.5" fill="#fff" stroke="#555" stroke-width="0.7"/>
<text x="728.2" y="401.6" font-size="7" fill="#202020" text-anchor="start" font-weight="normal" font-family='"Liberation Sans", sans-serif' >Use I</text>
<rect x="720.3" y="407.9" width="6.5" height="6.5" fill="#fff" stroke="#555" stroke-width="0.7"/>
<text x="728.2" y="413.6" font-size="7" fill="#202020" text-anchor="start" font-weight="normal" font-family='"Liberation Sans", sans-serif' >Use I</text>
<rect x="716" y="417.6" width="25" height="0.8" fill="#dcdcdc" />
<text x="719.2" y="428" font-size="7" fill="#202020" text-anchor="start" font-weight="normal" font-family='"Liberation Sans", sans-serif' >Presets r</text>
<rect x="718" y="432.4" width="23" height="12" fill="#ffffff" stroke="#e2e2e2" stroke-width="0.6"/>
<text x="720.5" y="440.5" font-size="6.5" fill="#404040" text-anchor="start" font-weight="normal" font-family='"Liberation Sans", sans-serif' >---</text>
<text x="719.2" y="453.6" font-size="7" fill="#202020" text-anchor="start" font-weight="normal" font-family='"Liberation Sans", sans-serif' >Viewports</text>
<rect x="718" y="458" width="23" height="11.5" fill="#ffffff" stroke="#e2e2e2" stroke-width="0.6"/>
<text x="720.5" y="466" font-size="6.5" fill="#404040" text-anchor="start" font-weight="normal" font-family='"Liberation Sans", sans-serif' >---</text>
<rect x="0" y="473" width="741" height="13" fill="#f0f0f0" />
<rect x="0" y="473" width="741" height="2.6" fill="#fafcfa" />
<text x="-1" y="483" font-size="7" fill="#3a3a3a" text-anchor="start" font-weight="normal" font-family='"Liberation Sans", sans-serif' >s</text>
<text x="526.2" y="483" font-size="7" fill="#3a3a3a" text-anchor="start" font-weight="normal" font-family='"Liberation Sans", sans-serif' textLength="16.2" lengthAdjust="spacingAndGlyphs" >DC15</text>
<text x="607" y="483" font-size="7" fill="#3a3a3a" text-anchor="start" font-weight="normal" font-family='"Liberation Sans", sans-serif' textLength="21" lengthAdjust="spacingAndGlyphs" >dx 2.95</text>
<text x="670.4" y="483" font-size="7" fill="#3a3a3a" text-anchor="start" font-weight="normal" font-family='"Liberation Sans", sans-serif' textLength="23.6" lengthAdjust="spacingAndGlyphs" >dy -2.99</text>
<text x="733.4" y="483" font-size="7" fill="#3a3a3a" text-anchor="start" font-weight="normal" font-family='"Liberation Sans", sans-serif' >zoom</text>
</svg></body></html>
